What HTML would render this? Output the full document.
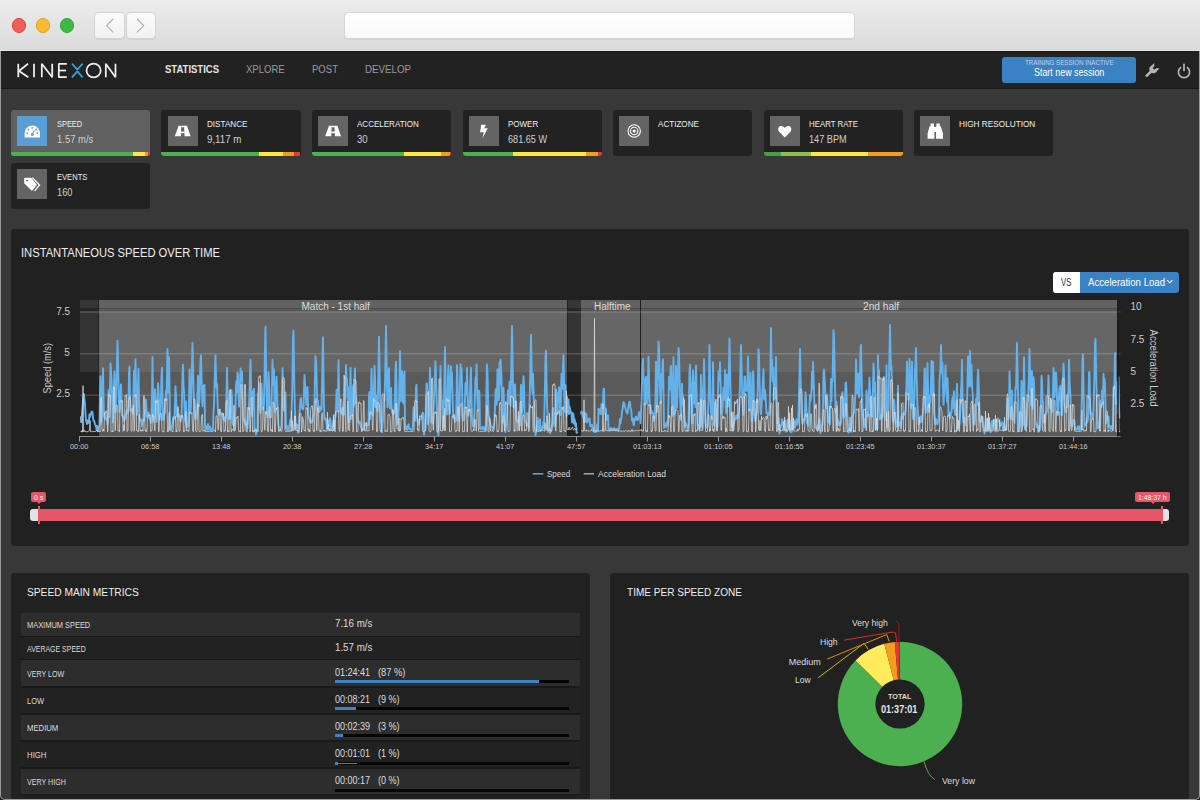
<!DOCTYPE html>
<html><head><meta charset="utf-8">
<style>
*{box-sizing:border-box}
html,body{margin:0;padding:0;width:1200px;height:800px;overflow:hidden;background:#1e1e1e;font-family:"Liberation Sans",sans-serif}
.abs{position:absolute}
.t{position:absolute;white-space:pre;transform-origin:0 0;font-family:"Liberation Sans",sans-serif}
#win{position:absolute;left:0;top:0;width:1200px;height:800px;border-radius:0 0 5px 5px;overflow:hidden;background:#383838}
#frame{position:absolute;left:0;top:51px;width:1200px;height:749px;border-radius:0 0 5px 5px;border:1px solid #9c9c9c;border-top:0;pointer-events:none}
#chrome{position:absolute;left:0;top:0;width:1200px;height:51px;background:linear-gradient(#ececec,#dbdbdb);border-bottom:1px solid #e4e4e4}
.light{position:absolute;width:14.6px;height:14.6px;border-radius:50%}
.navbtn{position:absolute;top:12px;height:27px;background:linear-gradient(#fbfbfb,#f1f1f1);border:1px solid #d3d3d3;border-radius:4px;box-shadow:0 1px 0 rgba(0,0,0,0.06)}
#addr{position:absolute;left:343.6px;top:11.7px;width:511.4px;height:27px;background:linear-gradient(#ffffff,#f9f9f9);border:1px solid #d6d6d6;border-radius:4px;box-shadow:0 1px 0 rgba(0,0,0,0.05)}
#nav{position:absolute;left:0;top:51px;width:1200px;height:38px;background:#222222;border-top:1px solid #1a1a1a;border-bottom:1px solid #1c1c1c}
.tile{position:absolute;height:46px;width:139.5px;background:#222222;border-radius:3px;overflow:hidden}
.tile.act{background:#606060}
.ibox{position:absolute;left:6.5px;top:6.5px;width:30.2px;height:30.2px;background:#646464}
.bar{position:absolute;left:0;bottom:0;height:3.5px;width:100%;display:flex}
.bar span{display:block;height:100%}
.panel{position:absolute;background:#212121;border-radius:3px}
.row{position:absolute;left:21px;width:559px;height:25px}
.row.l{background:#2d2d2d}
.track{position:absolute;left:335px;width:234px;height:3px;background:#050505}
.fill{position:absolute;left:0;top:0;height:3px;background:#3d83c6}
</style></head>
<body>
<div id="win">
  <div id="chrome">
    <div class="light" style="left:11.7px;top:18px;background:#ee5e5a;border:0.6px solid #e0443f"></div>
    <div class="light" style="left:35.8px;top:18px;background:#f8bd2f;border:0.6px solid #e0a21c"></div>
    <div class="light" style="left:59.8px;top:18px;background:#3dba46;border:0.6px solid #2ea83a"></div>
    <div class="navbtn" style="left:94px;width:31px"></div>
    <div class="navbtn" style="left:125.5px;width:30.5px"></div>
    <svg class="abs" style="left:94px;top:12px" width="62" height="27">
      <polyline points="19.2,6.8 12.6,13.6 19.2,20.4" fill="none" stroke="#acacac" stroke-width="1.15"/>
      <polyline points="43,6.8 49.6,13.6 43,20.4" fill="none" stroke="#acacac" stroke-width="1.15"/>
    </svg>
    <div id="addr"></div>
  </div>
  <div id="nav">
    <svg class="abs" style="left:0;top:0" width="130" height="38">
      <g fill="none" stroke="#f0f0f0" stroke-width="1.75" stroke-linejoin="bevel">
        <!-- K -->
        <line x1="18.3" y1="11.8" x2="18.3" y2="25.2"/>
        <polyline points="28,11.8 19,19 28.3,25.2"/>
        <!-- I -->
        <line x1="34" y1="11.8" x2="34" y2="25.2"/>
        <!-- N -->
        <polyline points="41.8,25.2 41.8,11.8 52.2,25.2 52.2,11.8"/>
        <!-- E -->
        <polyline points="66.8,11.8 58.8,11.8 58.8,25.2 66.8,25.2"/>
        <line x1="58.8" y1="18.5" x2="66" y2="18.5"/>
        <!-- O -->
        <ellipse cx="93.6" cy="18.5" rx="7.1" ry="6.8"/>
        <!-- N -->
        <polyline points="105.8,25.2 105.8,11.8 115.5,25.2 115.5,11.8"/>
      </g>
      <g fill="none" stroke="#26a6df" stroke-width="1.8" stroke-linejoin="bevel">
        <polyline points="72,11.6 77.3,17.6 82.6,11.6"/>
        <polyline points="72,25.4 77.3,19.4 82.6,25.4"/>
      </g>
    </svg>
    <div class="abs" style="left:1002px;top:5px;width:134px;height:26px;background:#3b82c4;border-radius:3px"></div>
    <svg class="abs" style="left:1140px;top:8px" width="58" height="24">
      <!-- wrench -->
      <g transform="translate(11.5,11) rotate(45)">
        <rect x="-1.3" y="-1" width="2.6" height="9" rx="1" fill="#b5b5b5"/>
        <path d="M-3.8,-4.5 A4.2,4.2 0 1 0 3.8,-4.5 L3.8,-7.5 L1.4,-5.5 L1.4,-3 L-1.4,-3 L-1.4,-5.5 L-3.8,-7.5 Z" fill="#b5b5b5"/>
      </g>
      <!-- power -->
      <path d="M40.6,7.6 A5.6,5.6 0 1 0 47.4,7.6" fill="none" stroke="#b5b5b5" stroke-width="1.7" stroke-linecap="round"/>
      <line x1="44" y1="4.3" x2="44" y2="10.5" stroke="#b5b5b5" stroke-width="1.7" stroke-linecap="round"/>
    </svg>
  </div>

  <!-- tiles -->
  <div class="tile act" style="left:10.7px;top:109.6px">
    <div class="ibox" style="background:#5a9ed6"></div>
    <div class="bar"><span style="width:87.6%;background:#4caf50"></span><span style="width:8.8%;background:#fde73e"></span><span style="width:2.4%;background:#f39c1f"></span><span style="width:1.2%;background:#e53935"></span></div>
  </div>
  <div class="tile" style="left:161px;top:109.6px">
    <div class="ibox"></div>
    <div class="bar"><span style="width:70%;background:#4caf50"></span><span style="width:17.8%;background:#fde73e"></span><span style="width:7.5%;background:#f39c1f"></span><span style="width:4.7%;background:#e53935"></span></div>
  </div>
  <div class="tile" style="left:311.5px;top:109.6px">
    <div class="ibox"></div>
    <div class="bar"><span style="width:66%;background:#4caf50"></span><span style="width:27%;background:#fde73e"></span><span style="width:6.5%;background:#f39c1f"></span><span style="width:0.5%;background:#e53935"></span></div>
  </div>
  <div class="tile" style="left:462.5px;top:109.6px">
    <div class="ibox"></div>
    <div class="bar"><span style="width:36.5%;background:#4caf50"></span><span style="width:51.8%;background:#fde73e"></span><span style="width:8.6%;background:#f39c1f"></span><span style="width:3.1%;background:#e53935"></span></div>
  </div>
  <div class="tile" style="left:612.5px;top:109.6px">
    <div class="ibox"></div>
  </div>
  <div class="tile" style="left:763.5px;top:109.6px">
    <div class="ibox"></div>
    <div class="bar"><span style="width:12.8%;background:#43a047"></span><span style="width:21%;background:#8bc34a"></span><span style="width:41%;background:#fde73e"></span><span style="width:25.2%;background:#f39c1f"></span></div>
  </div>
  <div class="tile" style="left:913.5px;top:109.6px">
    <div class="ibox"></div>
  </div>
  <div class="tile" style="left:10.7px;top:162.8px">
    <div class="ibox"></div>
  </div>

  <!-- tile icons -->
  <svg class="abs" style="left:0;top:0" width="1200" height="220">
    <g fill="#ffffff">
      <!-- gauge -->
      <path d="M24.6,137.4 L24.6,133 A7.6,7.3 0 0 1 40,133 L40,137.4 Z"/>
      <g fill="#5a9ed6">
        <circle cx="32.3" cy="134.6" r="1.5"/>
        <circle cx="27.3" cy="133.1" r="0.9"/><circle cx="28.5" cy="129.5" r="0.9"/><circle cx="32.3" cy="127.9" r="0.9"/><circle cx="36" cy="129.5" r="0.9"/><circle cx="37.3" cy="133.1" r="0.9"/>
      </g>
      <line x1="32.3" y1="134.6" x2="34.3" y2="130" stroke="#5a9ed6" stroke-width="1"/>
      <!-- road distance -->
      <path d="M178.6,125.8 L181.3,125.8 L180.8,136.3 L174.8,136.3 Z M184,125.8 L187,125.8 L190.6,136.3 L184.6,136.3 Z M181.2,131.5 L184.3,131.5 L184.4,133.3 L181.1,133.3 Z M181.5,125.8 L184,125.8 L184,127.2 L181.4,127.2 Z"/>
      <!-- road acceleration -->
      <path d="M329,125.8 L331.7,125.8 L331.2,136.3 L325.2,136.3 Z M334.4,125.8 L337.4,125.8 L341,136.3 L335,136.3 Z M331.6,131.5 L334.7,131.5 L334.8,133.3 L331.5,133.3 Z M331.9,125.8 L334.4,125.8 L334.4,127.2 L331.8,127.2 Z"/>
      <!-- bolt -->
      <path d="M481.2,124.8 L485.8,124.8 L484.3,128.3 L487.8,128.3 L482.3,138.6 L483.9,132.2 L480.1,132.2 Z"/>
      <!-- heart -->
      <path d="M784.8,137.5 L779.4,132 C777.6,130 777.9,126.6 780.6,126 C782.6,125.6 784,126.8 784.8,128 C785.6,126.8 787,125.6 789,126 C791.7,126.6 792,130 790.2,132 Z"/>
      <!-- binoculars -->
      <path d="M930.6,123.6 L934,123.6 L934,126.2 L934.4,126.2 L934.4,138.8 L927.6,138.8 L927.6,133.6 L929.6,126.2 L930.6,126.2 Z M936.4,123.6 L939.8,123.6 L939.8,126.2 L940.8,126.2 L943,133.6 L943,138.8 L936,138.8 L936,126.2 L936.4,126.2 Z M934,127 L936.4,127 L936.4,132 L934,132 Z"/>
      <!-- tags -->
      <path d="M24.2,178.6 Q24.2,177.8 25,177.8 L31.2,177.8 L36.9,184.8 L32,191 L24.2,183.2 Z"/>
      <polyline points="32.4,177.6 39.6,185 34.6,190.8" fill="none" stroke="#ffffff" stroke-width="1.3"/>
      <circle cx="26.9" cy="180.6" r="0.95" fill="#646464"/>
    </g>
    <!-- target -->
    <g fill="none" stroke="#ffffff" stroke-width="1.1">
      <circle cx="634.2" cy="131" r="6.2"/>
      <circle cx="634.2" cy="131" r="3.7"/>
    </g>
    <circle cx="634.2" cy="131" r="1.6" fill="#ffffff"/>
  </svg>

  <!-- chart panel -->
  <div class="panel" style="left:10.8px;top:229.4px;width:1178.3px;height:316.6px"></div>
  <div class="abs" style="left:1053px;top:271.5px;width:126px;height:21px;background:#3b82c4;border-radius:3px"></div>
  <div class="abs" style="left:1053px;top:271.5px;width:27px;height:21px;background:#ffffff;border-radius:3px 0 0 3px"></div>
  <svg class="abs" style="left:1166px;top:278px" width="10" height="8"><polyline points="1.2,2.2 3.8,4.8 6.4,2.2" fill="none" stroke="#ffffff" stroke-width="1.1"/></svg>
  
<svg class='abs' style='left:0;top:0' width='1200' height='800' viewBox='0 0 1200 800'>
  <defs><clipPath id='pc'><rect x='80' y='300' width='1040.5' height='137'/></clipPath></defs>
  <!-- plot background: outer -->
  <g>
    <rect x='80' y='300' width='1037' height='8.5' fill='#363636'/>
    <rect x='80' y='308.5' width='1037' height='2.7' fill='#262626'/>
    <rect x='80' y='311.2' width='1037' height='60.8' fill='#343434'/>
    <rect x='80' y='372' width='1037' height='64' fill='#232323'/>
  </g>
  <rect x='99' y='300' width='468' height='8.5' fill='#626262'/><rect x='99' y='308.5' width='468' height='2.7' fill='#575757'/><rect x='99' y='311.2' width='468' height='60.8' fill='#666666'/><rect x='99' y='372' width='468' height='64' fill='#5a5a5a'/><rect x='581' y='300' width='59' height='8.5' fill='#626262'/><rect x='581' y='308.5' width='59' height='2.7' fill='#575757'/><rect x='581' y='311.2' width='59' height='60.8' fill='#666666'/><rect x='581' y='372' width='59' height='64' fill='#5a5a5a'/><rect x='641' y='300' width='476' height='8.5' fill='#626262'/><rect x='641' y='308.5' width='476' height='2.7' fill='#575757'/><rect x='641' y='311.2' width='476' height='60.8' fill='#666666'/><rect x='641' y='372' width='476' height='64' fill='#5a5a5a'/>
  <rect x='98' y='300' width='1' height='136' fill='#1f1f1f'/>
  <rect x='567' y='300' width='0.8' height='136' fill='#1f1f1f'/>
  <rect x='640' y='300' width='1' height='136' fill='#1f1f1f'/>
  <!-- grid -->
  <g stroke='#ffffff' stroke-width='1.5' stroke-opacity='0.17'>
    <line x1='80' y1='312' x2='1120.5' y2='312'/>
    <line x1='80' y1='353.7' x2='1120.5' y2='353.7'/>
    <line x1='80' y1='395.3' x2='1120.5' y2='395.3'/>
  </g>
  <g clip-path='url(#pc)'>
    <path d='M80.0,418.3 L80.5,417.2 L81.0,422.0 L81.5,422.0 L82.0,413.9 L82.5,408.1 L83.0,400.4 L83.5,397.0 L84.0,394.1 L84.5,399.9 L85.0,404.5 L85.5,413.5 L86.0,420.7 L86.5,421.9 L87.0,424.0 L87.5,420.5 L88.0,423.0 L88.5,422.8 L89.0,419.1 L89.5,414.3 L90.0,417.1 L90.5,414.0 L91.0,414.4 L91.5,411.8 L92.0,411.5 L92.5,412.4 L93.0,418.0 L93.5,420.6 L94.0,420.6 L94.5,422.2 L95.0,424.2 L95.5,425.6 L96.0,426.0 L96.5,429.8 L97.0,425.8 L97.5,430.1 L98.0,430.8 L98.5,427.6 L99.0,426.4 L99.5,425.5 L100.0,389.0 L100.5,376.1 L101.0,401.2 L101.5,422.2 L102.0,412.1 L102.5,388.0 L103.0,368.3 L103.5,397.9 L104.0,416.9 L104.5,415.1 L105.0,413.5 L105.5,419.2 L106.0,419.5 L106.5,419.5 L107.0,417.8 L107.5,424.5 L108.0,412.7 L108.5,390.3 L109.0,406.0 L109.5,417.0 L110.0,388.7 L110.5,363.3 L111.0,369.7 L111.5,379.8 L112.0,393.5 L112.5,408.6 L113.0,422.4 L113.5,408.6 L114.0,383.5 L114.5,371.4 L115.0,397.4 L115.5,412.0 L116.0,400.9 L116.5,382.9 L117.0,362.6 L117.5,340.8 L118.0,362.6 L118.5,382.9 L119.0,400.9 L119.5,412.0 L120.0,402.9 L120.5,394.0 L121.0,384.4 L121.5,400.4 L122.0,415.5 L122.5,415.1 L123.0,418.0 L123.5,416.4 L124.0,421.4 L124.5,418.5 L125.0,418.3 L125.5,418.6 L126.0,414.3 L126.5,410.9 L127.0,413.3 L127.5,409.7 L128.0,412.6 L128.5,401.9 L129.0,372.1 L129.5,366.6 L130.0,399.9 L130.5,410.6 L131.0,408.9 L131.5,411.0 L132.0,410.9 L132.5,413.2 L133.0,413.5 L133.5,390.1 L134.0,370.8 L134.5,396.0 L135.0,374.2 L135.5,359.3 L136.0,381.9 L136.5,388.8 L137.0,414.9 L137.5,411.1 L138.0,387.0 L138.5,369.0 L139.0,394.8 L139.5,417.3 L140.0,420.6 L140.5,420.4 L141.0,419.3 L141.5,421.6 L142.0,426.2 L142.5,421.3 L143.0,420.0 L143.5,419.2 L144.0,420.9 L144.5,418.4 L145.0,412.9 L145.5,408.9 L146.0,399.6 L146.5,408.7 L147.0,416.8 L147.5,415.4 L148.0,415.1 L148.5,412.5 L149.0,417.9 L149.5,415.8 L150.0,419.3 L150.5,417.6 L151.0,423.0 L151.5,416.0 L152.0,395.7 L152.5,357.0 L153.0,398.8 L153.5,421.7 L154.0,413.2 L154.5,401.0 L155.0,389.5 L155.5,402.4 L156.0,414.5 L156.5,421.7 L157.0,414.5 L157.5,399.4 L158.0,383.2 L158.5,389.4 L159.0,405.3 L159.5,419.7 L160.0,417.2 L160.5,404.2 L161.0,397.4 L161.5,375.3 L162.0,367.6 L162.5,401.5 L163.0,420.1 L163.5,419.0 L164.0,414.2 L164.5,412.8 L165.0,412.8 L165.5,402.0 L166.0,390.3 L166.5,397.7 L167.0,375.1 L167.5,349.0 L168.0,375.1 L168.5,393.0 L169.0,357.3 L169.5,386.1 L170.0,429.6 L170.5,426.2 L171.0,426.3 L171.5,428.7 L172.0,426.7 L172.5,425.7 L173.0,417.7 L173.5,419.9 L174.0,416.4 L174.5,416.7 L175.0,405.1 L175.5,386.3 L176.0,395.1 L176.5,413.4 L177.0,416.5 L177.5,415.1 L178.0,414.5 L178.5,415.9 L179.0,414.4 L179.5,418.0 L180.0,418.5 L180.5,421.5 L181.0,418.1 L181.5,419.7 L182.0,397.6 L182.5,373.0 L183.0,364.8 L183.5,385.5 L184.0,391.4 L184.5,406.4 L185.0,420.0 L185.5,421.6 L186.0,401.1 L186.5,423.5 L187.0,427.3 L187.5,424.7 L188.0,426.5 L188.5,424.6 L189.0,399.5 L189.5,369.5 L190.0,393.8 L190.5,412.0 L191.0,403.8 L191.5,385.8 L192.0,365.2 L192.5,343.0 L193.0,365.2 L193.5,385.8 L194.0,403.8 L194.5,412.0 L195.0,415.2 L195.5,419.4 L196.0,416.5 L196.5,417.9 L197.0,409.6 L197.5,393.2 L198.0,375.7 L198.5,389.7 L199.0,406.4 L199.5,396.4 L200.0,378.7 L200.5,359.3 L201.0,355.2 L201.5,375.0 L202.0,393.0 L202.5,406.3 L203.0,398.5 L203.5,385.8 L204.0,386.4 L204.5,385.0 L205.0,426.8 L205.5,429.8 L206.0,426.3 L206.5,429.1 L207.0,427.4 L207.5,430.1 L208.0,424.0 L208.5,428.7 L209.0,429.7 L209.5,427.0 L210.0,426.5 L210.5,427.8 L211.0,430.2 L211.5,429.8 L212.0,430.1 L212.5,428.8 L213.0,429.2 L213.5,412.0 L214.0,404.6 L214.5,387.5 L215.0,367.9 L215.5,355.3 L216.0,375.2 L216.5,387.7 L217.0,384.0 L217.5,399.9 L218.0,412.8 L218.5,415.1 L219.0,413.4 L219.5,410.5 L220.0,412.9 L220.5,413.9 L221.0,413.0 L221.5,413.6 L222.0,414.1 L222.5,416.3 L223.0,414.4 L223.5,419.5 L224.0,416.8 L224.5,419.1 L225.0,421.6 L225.5,418.9 L226.0,416.5 L226.5,392.2 L227.0,367.6 L227.5,387.5 L228.0,399.2 L228.5,410.2 L229.0,418.9 L229.5,418.9 L230.0,418.9 L230.5,410.9 L231.0,400.9 L231.5,390.3 L232.0,397.5 L232.5,423.1 L233.0,424.8 L233.5,421.7 L234.0,424.9 L234.5,424.7 L235.0,421.3 L235.5,405.1 L236.0,385.5 L236.5,381.0 L237.0,392.5 L237.5,372.4 L238.0,375.1 L238.5,395.1 L239.0,406.6 L239.5,393.5 L240.0,386.5 L240.5,368.4 L241.0,380.5 L241.5,380.4 L242.0,371.4 L242.5,395.9 L243.0,410.9 L243.5,420.3 L244.0,420.9 L244.5,419.2 L245.0,424.3 L245.5,421.6 L246.0,422.9 L246.5,425.7 L247.0,425.4 L247.5,428.4 L248.0,421.8 L248.5,416.9 L249.0,405.8 L249.5,393.9 L250.0,374.5 L250.5,359.5 L251.0,382.7 L251.5,404.6 L252.0,416.0 L252.5,403.9 L253.0,390.9 L253.5,400.9 L254.0,388.7 L254.5,431.1 L255.0,430.1 L255.5,428.9 L256.0,434.5 L256.5,433.2 L257.0,430.4 L257.5,430.5 L258.0,393.5 L258.5,400.0 L259.0,382.7 L259.5,402.6 L260.0,409.2 L260.5,413.3 L261.0,407.0 L261.5,384.0 L262.0,392.4 L262.5,406.0 L263.0,409.3 L263.5,409.3 L264.0,403.4 L264.5,377.0 L265.0,346.4 L265.5,326.7 L266.0,359.1 L266.5,388.3 L267.0,411.4 L267.5,417.3 L268.0,404.1 L268.5,372.3 L269.0,380.2 L269.5,411.0 L270.0,417.3 L270.5,417.3 L271.0,417.3 L271.5,403.7 L272.0,382.6 L272.5,359.6 L273.0,374.3 L273.5,384.8 L274.0,369.2 L274.5,404.5 L275.0,412.3 L275.5,398.8 L276.0,384.3 L276.5,376.7 L277.0,391.6 L277.5,405.6 L278.0,416.5 L278.5,425.5 L279.0,427.5 L279.5,430.6 L280.0,428.2 L280.5,427.5 L281.0,427.2 L281.5,427.3 L282.0,393.8 L282.5,368.3 L283.0,384.7 L283.5,408.8 L284.0,410.9 L284.5,408.9 L285.0,404.3 L285.5,392.5 L286.0,428.6 L286.5,429.1 L287.0,426.0 L287.5,430.1 L288.0,427.6 L288.5,430.0 L289.0,429.1 L289.5,425.3 L290.0,421.7 L290.5,419.2 L291.0,425.9 L291.5,412.0 L292.0,399.1 L292.5,370.4 L293.0,337.7 L293.5,330.8 L294.0,364.1 L294.5,393.8 L295.0,412.0 L295.5,424.3 L296.0,425.3 L296.5,424.1 L297.0,428.3 L297.5,425.0 L298.0,432.9 L298.5,429.0 L299.0,431.9 L299.5,411.7 L300.0,406.0 L300.5,398.9 L301.0,398.0 L301.5,405.1 L302.0,408.1 L302.5,408.8 L303.0,409.4 L303.5,407.1 L304.0,391.3 L304.5,374.9 L305.0,385.0 L305.5,388.3 L306.0,400.4 L306.5,404.9 L307.0,388.2 L307.5,387.0 L308.0,403.8 L308.5,415.2 L309.0,418.4 L309.5,418.2 L310.0,422.1 L310.5,418.7 L311.0,422.8 L311.5,422.4 L312.0,422.0 L312.5,420.8 L313.0,421.1 L313.5,415.3 L314.0,415.3 L314.5,400.1 L315.0,378.8 L315.5,356.1 L316.0,360.4 L316.5,372.5 L317.0,393.8 L317.5,409.2 L318.0,400.5 L318.5,408.8 L319.0,412.3 L319.5,411.5 L320.0,406.6 L320.5,410.2 L321.0,410.1 L321.5,409.2 L322.0,384.1 L322.5,356.8 L323.0,337.2 L323.5,375.7 L324.0,407.6 L324.5,419.2 L325.0,417.7 L325.5,420.0 L326.0,419.3 L326.5,423.4 L327.0,428.9 L327.5,429.7 L328.0,420.4 L328.5,424.5 L329.0,425.6 L329.5,426.0 L330.0,418.2 L330.5,421.0 L331.0,429.6 L331.5,430.2 L332.0,428.0 L332.5,426.5 L333.0,424.1 L333.5,420.2 L334.0,425.0 L334.5,427.5 L335.0,414.8 L335.5,416.3 L336.0,410.9 L336.5,389.7 L337.0,394.6 L337.5,409.7 L338.0,395.0 L338.5,360.1 L339.0,386.0 L339.5,409.8 L340.0,411.3 L340.5,410.9 L341.0,413.8 L341.5,410.7 L342.0,409.8 L342.5,407.7 L343.0,414.7 L343.5,411.8 L344.0,414.6 L344.5,400.9 L345.0,380.3 L345.5,384.4 L346.0,365.0 L346.5,378.6 L347.0,378.6 L347.5,398.6 L348.0,386.8 L348.5,421.8 L349.0,421.6 L349.5,422.1 L350.0,395.4 L350.5,367.6 L351.0,395.3 L351.5,419.1 L352.0,415.7 L352.5,407.9 L353.0,387.5 L353.5,384.9 L354.0,405.5 L354.5,378.2 L355.0,368.4 L355.5,402.9 L356.0,397.1 L356.5,400.5 L357.0,414.4 L357.5,419.2 L358.0,422.1 L358.5,420.8 L359.0,422.3 L359.5,423.5 L360.0,422.2 L360.5,424.5 L361.0,427.0 L361.5,428.0 L362.0,430.9 L362.5,429.0 L363.0,430.2 L363.5,429.5 L364.0,429.3 L364.5,424.1 L365.0,423.5 L365.5,423.5 L366.0,425.1 L366.5,424.8 L367.0,426.0 L367.5,424.7 L368.0,423.9 L368.5,424.9 L369.0,395.6 L369.5,391.9 L370.0,419.2 L370.5,411.5 L371.0,390.9 L371.5,368.9 L372.0,388.6 L372.5,409.4 L373.0,415.5 L373.5,406.7 L374.0,386.3 L374.5,365.9 L375.0,376.8 L375.5,407.0 L376.0,399.2 L376.5,395.7 L377.0,409.1 L377.5,411.6 L378.0,391.2 L378.5,365.3 L379.0,336.7 L379.5,365.3 L380.0,391.2 L380.5,408.2 L381.0,422.2 L381.5,423.2 L382.0,432.4 L382.5,423.2 L383.0,420.6 L383.5,408.6 L384.0,395.5 L384.5,399.9 L385.0,384.1 L385.5,356.3 L386.0,326.0 L386.5,356.3 L387.0,384.1 L387.5,407.4 L388.0,399.9 L388.5,371.9 L389.0,368.1 L389.5,396.3 L390.0,408.5 L390.5,392.0 L391.0,387.9 L391.5,404.7 L392.0,411.6 L392.5,413.4 L393.0,411.2 L393.5,414.0 L394.0,412.4 L394.5,412.8 L395.0,392.7 L395.5,368.8 L396.0,361.8 L396.5,383.9 L397.0,424.7 L397.5,420.5 L398.0,423.8 L398.5,412.0 L399.0,401.2 L399.5,377.8 L400.0,351.0 L400.5,377.8 L401.0,401.2 L401.5,397.1 L402.0,371.1 L402.5,376.6 L403.0,402.2 L403.5,403.5 L404.0,380.5 L404.5,371.5 L405.0,428.2 L405.5,429.2 L406.0,427.8 L406.5,426.1 L407.0,429.9 L407.5,427.2 L408.0,427.9 L408.5,424.1 L409.0,428.9 L409.5,429.1 L410.0,428.5 L410.5,429.3 L411.0,429.7 L411.5,429.6 L412.0,429.8 L412.5,429.4 L413.0,424.1 L413.5,407.3 L414.0,415.9 L414.5,420.9 L415.0,420.9 L415.5,415.0 L416.0,387.6 L416.5,384.8 L417.0,412.5 L417.5,420.9 L418.0,422.8 L418.5,420.6 L419.0,424.9 L419.5,420.3 L420.0,419.1 L420.5,418.9 L421.0,418.8 L421.5,418.3 L422.0,414.2 L422.5,413.3 L423.0,412.7 L423.5,414.6 L424.0,434.5 L424.5,430.8 L425.0,428.8 L425.5,429.7 L426.0,406.7 L426.5,383.5 L427.0,384.1 L427.5,407.2 L428.0,424.5 L428.5,420.3 L429.0,416.2 L429.5,387.7 L430.0,367.8 L430.5,385.2 L431.0,409.3 L431.5,422.5 L432.0,418.1 L432.5,420.8 L433.0,423.7 L433.5,412.0 L434.0,401.0 L434.5,384.6 L435.0,372.3 L435.5,361.3 L436.0,379.4 L436.5,395.9 L437.0,409.6 L437.5,432.1 L438.0,432.7 L438.5,435.3 L439.0,427.5 L439.5,425.9 L440.0,393.6 L440.5,365.9 L441.0,386.1 L441.5,399.3 L442.0,401.1 L442.5,419.8 L443.0,427.5 L443.5,412.0 L444.0,401.6 L444.5,376.2 L445.0,347.0 L445.5,376.2 L446.0,401.6 L446.5,412.0 L447.0,414.4 L447.5,405.6 L448.0,376.3 L448.5,365.5 L449.0,395.7 L449.5,413.8 L450.0,413.4 L450.5,382.0 L451.0,366.3 L451.5,387.5 L452.0,372.6 L452.5,392.2 L453.0,410.5 L453.5,417.3 L454.0,418.5 L454.5,418.6 L455.0,422.3 L455.5,417.3 L456.0,420.5 L456.5,395.9 L457.0,364.9 L457.5,377.8 L458.0,407.7 L458.5,420.5 L459.0,420.2 L459.5,403.4 L460.0,384.3 L460.5,364.2 L461.0,377.7 L461.5,367.9 L462.0,383.1 L462.5,416.4 L463.0,420.5 L463.5,420.5 L464.0,419.0 L464.5,412.8 L465.0,398.4 L465.5,382.9 L466.0,382.8 L466.5,394.5 L467.0,368.0 L467.5,389.9 L468.0,414.5 L468.5,415.6 L469.0,411.8 L469.5,407.5 L470.0,393.7 L470.5,376.3 L471.0,367.8 L471.5,400.0 L472.0,417.1 L472.5,423.2 L473.0,426.4 L473.5,422.2 L474.0,426.8 L474.5,408.8 L475.0,393.5 L475.5,377.2 L476.0,383.8 L476.5,364.4 L477.0,383.3 L477.5,403.4 L478.0,411.1 L478.5,406.9 L479.0,390.6 L479.5,393.9 L480.0,428.7 L480.5,429.0 L481.0,428.5 L481.5,429.4 L482.0,428.3 L482.5,426.6 L483.0,429.3 L483.5,427.5 L484.0,427.0 L484.5,430.2 L485.0,429.7 L485.5,430.2 L486.0,425.6 L486.5,386.8 L487.0,364.5 L487.5,372.8 L488.0,394.7 L488.5,414.4 L489.0,416.3 L489.5,420.8 L490.0,421.7 L490.5,424.4 L491.0,426.5 L491.5,426.9 L492.0,426.8 L492.5,429.6 L493.0,429.0 L493.5,427.7 L494.0,426.5 L494.5,421.2 L495.0,407.2 L495.5,391.5 L496.0,389.0 L496.5,404.8 L497.0,397.9 L497.5,369.2 L498.0,371.3 L498.5,399.9 L499.0,400.3 L499.5,362.3 L500.0,384.2 L500.5,359.4 L501.0,368.1 L501.5,377.0 L502.0,402.1 L502.5,422.9 L503.0,408.2 L503.5,387.8 L504.0,403.8 L504.5,422.6 L505.0,426.3 L505.5,432.0 L506.0,426.3 L506.5,426.3 L507.0,417.0 L507.5,404.0 L508.0,390.3 L508.5,402.5 L509.0,403.3 L509.5,381.8 L510.0,384.1 L510.5,405.4 L511.0,383.4 L511.5,356.0 L512.0,326.0 L512.5,356.0 L513.0,383.4 L513.5,406.6 L514.0,407.7 L514.5,396.4 L515.0,384.4 L515.5,401.9 L516.0,418.3 L516.5,420.2 L517.0,420.8 L517.5,421.9 L518.0,419.9 L518.5,420.7 L519.0,419.2 L519.5,416.2 L520.0,425.4 L520.5,407.0 L521.0,384.7 L521.5,391.5 L522.0,413.3 L522.5,405.2 L523.0,389.4 L523.5,376.3 L524.0,385.4 L524.5,410.2 L525.0,421.5 L525.5,421.4 L526.0,421.8 L526.5,425.2 L527.0,424.1 L527.5,425.3 L528.0,425.9 L528.5,427.0 L529.0,412.0 L529.5,404.7 L530.0,384.1 L530.5,360.4 L531.0,334.6 L531.5,360.4 L532.0,384.1 L532.5,393.8 L533.0,373.6 L533.5,388.2 L534.0,407.6 L534.5,425.3 L535.0,428.6 L535.5,435.3 L536.0,432.8 L536.5,428.6 L537.0,427.7 L537.5,417.7 L538.0,430.3 L538.5,428.0 L539.0,424.8 L539.5,421.4 L540.0,419.2 L540.5,431.3 L541.0,428.5 L541.5,430.3 L542.0,428.8 L542.5,426.2 L543.0,428.6 L543.5,421.5 L544.0,427.5 L544.5,407.3 L545.0,384.1 L545.5,356.6 L546.0,350.7 L546.5,378.9 L547.0,403.2 L547.5,412.0 L548.0,431.9 L548.5,428.9 L549.0,428.5 L549.5,428.9 L550.0,433.3 L550.5,431.6 L551.0,429.9 L551.5,430.0 L552.0,424.9 L552.5,422.2 L553.0,407.9 L553.5,416.5 L554.0,424.2 L554.5,426.2 L555.0,423.3 L555.5,407.9 L556.0,389.5 L556.5,393.8 L557.0,411.9 L557.5,414.0 L558.0,399.1 L558.5,393.1 L559.0,387.1 L559.5,391.0 L560.0,407.1 L560.5,415.0 L561.0,394.9 L561.5,373.6 L562.0,387.5 L562.5,388.7 L563.0,367.0 L563.5,355.3 L564.0,381.3 L564.5,403.9 L565.0,412.0 L565.5,385.3 L566.0,399.3 L566.5,415.8 L567.0,396.9 L567.5,401.9 L568.0,411.8 L568.5,399.5 L569.0,414.1 L569.5,406.5 L570.0,408.6 L570.5,410.9 L571.0,413.2 L571.5,413.2 L572.0,422.4 L572.5,412.7 L573.0,415.0 L573.5,414.2 L574.0,423.7 L574.5,419.0 L575.0,421.8 L575.5,426.2 L576.0,423.2 L576.5,432.7 L577.0,432.3 L577.5,433.3 M581.0,414.4 L581.5,411.4 L582.0,411.9 L582.5,413.3 L583.0,417.2 L583.5,416.3 L584.0,422.3 L584.5,421.9 L585.0,412.7 L585.5,416.3 L586.0,421.4 L586.5,414.0 L587.0,422.5 L587.5,420.9 L588.0,419.2 L588.5,419.7 L589.0,421.0 L589.5,418.1 L590.0,424.5 L590.5,426.5 L591.0,425.2 L591.5,426.0 L592.0,424.9 L592.5,428.5 L593.0,427.9 L593.5,430.5 L594.0,430.6 L594.5,432.0 L595.0,432.1 L595.5,431.0 L596.0,431.7 L596.5,430.4 L597.0,424.4 L597.5,427.9 L598.0,431.3 L598.5,408.9 L599.0,411.0 L599.5,412.9 L600.0,413.0 L600.5,408.3 L601.0,414.1 L601.5,403.9 L602.0,407.3 L602.5,408.3 L603.0,404.2 L603.5,388.6 L604.0,388.6 L604.5,409.8 L605.0,413.6 L605.5,408.0 L606.0,408.9 L606.5,420.0 L607.0,415.2 L607.5,418.1 L608.0,415.2 L608.5,429.0 L609.0,428.6 L609.5,430.2 L610.0,428.6 L610.5,428.9 L611.0,427.9 L611.5,429.1 L612.0,429.4 L612.5,429.5 L613.0,428.9 L613.5,429.7 L614.0,428.0 L614.5,429.6 L615.0,429.6 L615.5,429.1 L616.0,429.2 L616.5,430.0 L617.0,428.8 L617.5,429.3 L618.0,430.5 L618.5,430.9 L619.0,428.2 L619.5,425.6 L620.0,418.9 L620.5,423.3 L621.0,419.4 L621.5,417.5 L622.0,411.6 L622.5,409.6 L623.0,406.0 L623.5,402.1 L624.0,403.1 L624.5,404.2 L625.0,406.5 L625.5,407.8 L626.0,411.0 L626.5,411.8 L627.0,413.2 L627.5,413.5 L628.0,409.6 L628.5,406.3 L629.0,404.3 L629.5,401.6 L630.0,402.3 L630.5,408.8 L631.0,409.0 L631.5,413.2 L632.0,420.5 L632.5,418.5 L633.0,420.9 L633.5,424.9 L634.0,424.9 L634.5,418.4 L635.0,419.0 L635.5,420.1 L636.0,416.5 L636.5,417.6 L637.0,418.5 L637.5,419.9 L638.0,419.5 L638.5,415.6 L639.0,411.9 L639.5,414.0 L640.0,412.9 L640.5,423.2 L641.0,411.7 L641.5,398.4 L642.0,381.6 L642.5,362.9 L643.0,359.0 L643.5,377.9 L644.0,378.6 L644.5,401.6 L645.0,404.7 L645.5,402.5 L646.0,376.7 L646.5,377.7 L647.0,403.4 L647.5,400.2 L648.0,379.0 L648.5,356.6 L649.0,376.5 L649.5,397.9 L650.0,413.5 L650.5,404.6 L651.0,413.2 L651.5,412.1 L652.0,411.2 L652.5,413.2 L653.0,412.7 L653.5,420.8 L654.0,415.0 L654.5,420.0 L655.0,414.5 L655.5,396.2 L656.0,361.6 L656.5,394.2 L657.0,412.0 L657.5,394.2 L658.0,369.4 L658.5,341.7 L659.0,347.4 L659.5,370.9 L660.0,385.5 L660.5,401.9 L661.0,403.2 L661.5,373.6 L662.0,387.5 L662.5,363.8 L663.0,359.2 L663.5,390.8 L664.0,427.9 L664.5,422.7 L665.0,424.5 L665.5,426.1 L666.0,427.0 L666.5,426.1 L667.0,421.8 L667.5,425.3 L668.0,418.6 L668.5,401.7 L669.0,376.8 L669.5,387.9 L670.0,389.3 L670.5,367.4 L671.0,365.8 L671.5,387.8 L672.0,408.4 L672.5,415.8 L673.0,387.4 L673.5,357.3 L674.0,391.2 L674.5,414.5 L675.0,413.0 L675.5,401.7 L676.0,365.9 L676.5,388.3 L677.0,407.7 L677.5,390.5 L678.0,370.2 L678.5,348.0 L679.0,352.6 L679.5,374.4 L680.0,394.2 L680.5,409.1 L681.0,419.8 L681.5,395.0 L682.0,383.6 L682.5,404.2 L683.0,395.4 L683.5,403.4 L684.0,411.8 L684.5,419.3 L685.0,426.7 L685.5,426.6 L686.0,423.3 L686.5,425.5 L687.0,425.6 L687.5,428.3 L688.0,428.1 L688.5,425.6 L689.0,396.3 L689.5,371.5 L690.0,364.8 L690.5,381.5 L691.0,383.9 L691.5,411.6 L692.0,423.4 L692.5,405.0 L693.0,370.4 L693.5,376.4 L694.0,403.2 L694.5,382.5 L695.0,388.0 L695.5,407.0 L696.0,365.5 L696.5,388.0 L697.0,412.5 L697.5,425.1 L698.0,426.6 L698.5,425.0 L699.0,429.4 L699.5,425.2 L700.0,426.6 L700.5,405.6 L701.0,374.7 L701.5,399.9 L702.0,426.6 L702.5,412.0 L703.0,394.1 L703.5,384.3 L704.0,359.0 L704.5,377.0 L705.0,401.4 L705.5,423.4 L706.0,426.6 L706.5,427.6 L707.0,425.7 L707.5,426.9 L708.0,412.0 L708.5,399.5 L709.0,374.0 L709.5,345.0 L710.0,374.0 L710.5,399.5 L711.0,412.0 L711.5,418.6 L712.0,419.0 L712.5,406.8 L713.0,362.3 L713.5,394.0 L714.0,425.8 L714.5,420.0 L715.0,409.6 L715.5,403.2 L716.0,414.0 L716.5,429.7 L717.0,425.9 L717.5,426.6 L718.0,389.4 L718.5,371.2 L719.0,374.2 L719.5,380.5 L720.0,362.3 L720.5,382.2 L721.0,401.1 L721.5,413.2 L722.0,414.7 L722.5,409.1 L723.0,397.2 L723.5,387.6 L724.0,400.0 L724.5,387.5 L725.0,370.0 L725.5,395.2 L726.0,413.2 L726.5,394.0 L727.0,374.7 L727.5,395.3 L728.0,406.5 L728.5,376.0 L729.0,365.1 L729.5,338.8 L730.0,365.1 L730.5,389.1 L731.0,409.0 L731.5,426.4 L732.0,426.6 L732.5,425.7 L733.0,424.1 L733.5,425.7 L734.0,422.3 L734.5,420.0 L735.0,417.7 L735.5,419.6 L736.0,416.6 L736.5,415.5 L737.0,418.3 L737.5,416.8 L738.0,417.7 L738.5,413.9 L739.0,412.0 L739.5,400.8 L740.0,384.0 L740.5,365.2 L741.0,345.0 L741.5,365.2 L742.0,384.0 L742.5,400.8 L743.0,412.0 L743.5,415.0 L744.0,396.8 L744.5,377.1 L745.0,376.4 L745.5,381.9 L746.0,390.4 L746.5,391.1 L747.0,384.6 L747.5,387.6 L748.0,356.4 L748.5,385.4 L749.0,410.0 L749.5,410.5 L750.0,390.6 L750.5,372.6 L751.0,393.7 L751.5,413.3 L752.0,421.5 L752.5,403.8 L753.0,371.2 L753.5,373.7 L754.0,406.1 L754.5,415.6 L755.0,418.3 L755.5,421.0 L756.0,416.3 L756.5,413.0 L757.0,412.0 L757.5,396.5 L758.0,374.2 L758.5,349.3 L759.0,354.4 L759.5,378.9 L760.0,400.6 L760.5,412.0 L761.0,414.4 L761.5,406.9 L762.0,397.2 L762.5,387.0 L763.0,377.8 L763.5,369.3 L764.0,397.5 L764.5,399.6 L765.0,390.0 L765.5,395.7 L766.0,405.1 L766.5,413.3 L767.0,412.5 L767.5,414.9 L768.0,412.9 L768.5,415.5 L769.0,414.9 L769.5,412.0 L770.0,395.4 L770.5,363.8 L771.0,328.0 L771.5,363.8 L772.0,359.5 L772.5,380.7 L773.0,381.4 L773.5,367.5 L774.0,399.6 L774.5,388.2 L775.0,398.1 L775.5,388.5 L776.0,357.0 L776.5,391.7 L777.0,416.4 L777.5,423.1 L778.0,419.7 L778.5,418.2 L779.0,430.1 L779.5,433.6 L780.0,429.6 L780.5,426.5 L781.0,425.2 L781.5,425.8 L782.0,419.3 L782.5,421.3 L783.0,423.6 L783.5,424.4 L784.0,426.3 L784.5,425.9 L785.0,420.5 L785.5,420.7 L786.0,431.7 L786.5,430.5 L787.0,426.2 L787.5,426.7 L788.0,419.4 L788.5,424.4 L789.0,419.3 L789.5,421.9 L790.0,431.2 L790.5,428.0 L791.0,432.3 L791.5,429.9 L792.0,430.2 L792.5,431.3 L793.0,423.5 L793.5,423.6 L794.0,420.8 L794.5,421.1 L795.0,427.5 L795.5,425.0 L796.0,424.5 L796.5,419.1 L797.0,421.3 L797.5,424.9 L798.0,421.9 L798.5,412.0 L799.0,395.8 L799.5,373.6 L800.0,349.0 L800.5,373.6 L801.0,395.8 L801.5,412.0 L802.0,419.4 L802.5,423.8 L803.0,422.2 L803.5,419.2 L804.0,419.7 L804.5,420.1 L805.0,408.4 L805.5,392.1 L806.0,399.0 L806.5,411.3 L807.0,422.7 L807.5,423.6 L808.0,425.3 L808.5,425.8 L809.0,419.6 L809.5,407.6 L810.0,394.9 L810.5,400.9 L811.0,397.8 L811.5,390.0 L812.0,371.8 L812.5,388.9 L813.0,361.9 L813.5,376.2 L814.0,390.2 L814.5,414.1 L815.0,426.7 L815.5,427.5 L816.0,428.0 L816.5,428.3 L817.0,429.2 L817.5,425.8 L818.0,430.0 L818.5,426.0 L819.0,422.9 L819.5,419.2 L820.0,425.8 L820.5,433.2 L821.0,425.9 L821.5,429.5 L822.0,425.8 L822.5,422.2 L823.0,404.8 L823.5,373.7 L824.0,369.4 L824.5,376.8 L825.0,384.5 L825.5,403.7 L826.0,408.0 L826.5,395.0 L827.0,394.4 L827.5,405.8 L828.0,416.6 L828.5,422.2 L829.0,417.3 L829.5,419.2 L830.0,424.4 L830.5,403.0 L831.0,378.9 L831.5,401.2 L832.0,379.1 L832.5,381.7 L833.0,357.0 L833.5,330.2 L834.0,335.7 L834.5,362.1 L835.0,386.4 L835.5,406.9 L836.0,412.0 L836.5,401.6 L837.0,408.5 L837.5,425.4 L838.0,419.7 L838.5,424.9 L839.0,424.6 L839.5,422.5 L840.0,425.3 L840.5,424.3 L841.0,422.5 L841.5,411.7 L842.0,394.1 L842.5,392.2 L843.0,410.0 L843.5,418.0 L844.0,416.2 L844.5,416.3 L845.0,400.3 L845.5,383.3 L846.0,382.4 L846.5,389.9 L847.0,410.0 L847.5,418.0 L848.0,424.8 L848.5,432.8 L849.0,428.8 L849.5,430.8 L850.0,428.9 L850.5,429.2 L851.0,431.9 L851.5,431.2 L852.0,419.5 L852.5,416.0 L853.0,415.6 L853.5,412.9 L854.0,413.0 L854.5,408.9 L855.0,400.2 L855.5,392.3 L856.0,359.3 L856.5,374.4 L857.0,393.2 L857.5,391.5 L858.0,382.2 L858.5,373.5 L859.0,397.3 L859.5,396.2 L860.0,374.4 L860.5,350.1 L861.0,345.0 L861.5,369.7 L862.0,392.2 L862.5,410.5 L863.0,418.7 L863.5,418.7 L864.0,424.2 L864.5,427.5 L865.0,426.3 L865.5,418.7 L866.0,408.0 L866.5,390.5 L867.0,398.4 L867.5,415.0 L868.0,416.6 L868.5,404.3 L869.0,390.8 L869.5,377.7 L870.0,391.8 L870.5,405.2 L871.0,415.1 L871.5,416.4 L872.0,416.8 L872.5,406.4 L873.0,385.6 L873.5,363.5 L874.0,369.8 L874.5,391.6 L875.0,382.3 L875.5,429.5 L876.0,427.6 L876.5,427.2 L877.0,427.8 L877.5,429.0 L878.0,355.3 L878.5,380.4 L879.0,370.2 L879.5,408.2 L880.0,419.4 L880.5,418.6 L881.0,418.3 L881.5,415.4 L882.0,416.4 L882.5,417.2 L883.0,408.8 L883.5,393.0 L884.0,377.0 L884.5,393.6 L885.0,409.4 L885.5,420.2 L886.0,399.5 L886.5,365.1 L887.0,424.9 L887.5,427.3 L888.0,412.0 L888.5,401.7 L889.0,379.0 L889.5,353.0 L890.0,325.0 L890.5,353.0 L891.0,369.4 L891.5,366.0 L892.0,390.3 L892.5,413.2 L893.0,421.1 L893.5,411.6 L894.0,399.8 L894.5,405.1 L895.0,416.7 L895.5,421.7 L896.0,424.3 L896.5,423.8 L897.0,426.9 L897.5,412.2 L898.0,385.7 L898.5,422.2 L899.0,425.9 L899.5,422.5 L900.0,423.0 L900.5,423.7 L901.0,427.8 L901.5,416.8 L902.0,416.1 L902.5,414.1 L903.0,419.0 L903.5,413.2 L904.0,415.1 L904.5,413.2 L905.0,414.2 L905.5,410.5 L906.0,399.6 L906.5,381.1 L907.0,361.8 L907.5,380.8 L908.0,380.7 L908.5,399.6 L909.0,376.4 L909.5,358.8 L910.0,383.0 L910.5,405.8 L911.0,408.2 L911.5,386.0 L912.0,361.6 L912.5,388.7 L913.0,418.7 L913.5,418.7 L914.0,412.0 L914.5,392.0 L915.0,370.1 L915.5,363.3 L916.0,348.0 L916.5,370.2 L917.0,390.5 L917.5,407.7 L918.0,412.0 L918.5,424.1 L919.0,423.6 L919.5,417.7 L920.0,422.6 L920.5,416.1 L921.0,419.4 L921.5,420.3 L922.0,421.9 L922.5,415.9 L923.0,411.8 L923.5,406.3 L924.0,395.3 L924.5,369.3 L925.0,368.4 L925.5,394.4 L926.0,412.3 L926.5,409.0 L927.0,390.2 L927.5,362.9 L928.0,385.9 L928.5,411.1 L929.0,411.9 L929.5,410.8 L930.0,395.5 L930.5,401.8 L931.0,381.8 L931.5,360.6 L932.0,373.9 L932.5,394.5 L933.0,362.0 L933.5,382.2 L934.0,412.8 L934.5,417.4 L935.0,422.2 L935.5,424.3 L936.0,419.0 L936.5,421.0 L937.0,422.1 L937.5,424.4 L938.0,420.8 L938.5,420.6 L939.0,412.0 L939.5,379.3 L940.0,373.8 L940.5,366.1 L941.0,345.0 L941.5,366.1 L942.0,372.9 L942.5,363.1 L943.0,387.9 L943.5,404.7 L944.0,395.6 L944.5,394.1 L945.0,380.7 L945.5,365.4 L946.0,383.4 L946.5,380.4 L947.0,401.8 L947.5,378.2 L948.0,392.3 L948.5,414.7 L949.0,414.6 L949.5,412.1 L950.0,417.8 L950.5,417.4 L951.0,414.7 L951.5,411.6 L952.0,400.9 L952.5,397.4 L953.0,408.4 L953.5,398.7 L954.0,391.1 L954.5,405.9 L955.0,414.7 L955.5,414.7 L956.0,414.7 L956.5,400.4 L957.0,383.8 L957.5,428.2 L958.0,425.4 L958.5,427.6 L959.0,425.8 L959.5,424.7 L960.0,416.8 L960.5,404.0 L961.0,390.0 L961.5,382.9 L962.0,359.8 L962.5,391.6 L963.0,418.3 L963.5,422.4 L964.0,417.8 L964.5,419.5 L965.0,418.4 L965.5,425.1 L966.0,418.8 L966.5,421.3 L967.0,404.0 L967.5,380.9 L968.0,356.5 L968.5,378.4 L969.0,386.5 L969.5,369.4 L970.0,351.0 L970.5,369.4 L971.0,386.5 L971.5,364.9 L972.0,384.2 L972.5,391.4 L973.0,401.6 L973.5,422.8 L974.0,424.6 L974.5,424.6 L975.0,421.5 L975.5,411.3 L976.0,400.3 L976.5,397.7 L977.0,405.0 L977.5,381.7 L978.0,369.6 L978.5,377.9 L979.0,393.8 L979.5,419.9 L980.0,422.0 L980.5,419.8 L981.0,420.1 L981.5,421.0 L982.0,420.2 L982.5,417.2 L983.0,424.1 L983.5,427.3 L984.0,426.8 L984.5,433.5 L985.0,430.8 L985.5,431.2 L986.0,418.4 L986.5,424.8 L987.0,430.3 L987.5,431.1 L988.0,419.5 L988.5,422.7 L989.0,424.7 L989.5,423.1 L990.0,428.5 L990.5,432.3 L991.0,431.5 L991.5,430.0 L992.0,421.1 L992.5,421.2 L993.0,426.2 L993.5,423.6 L994.0,421.0 L994.5,420.0 L995.0,422.6 L995.5,422.0 L996.0,431.5 L996.5,428.6 L997.0,420.9 L997.5,418.9 L998.0,418.5 L998.5,420.0 L999.0,421.3 L999.5,420.2 L1000.0,424.8 L1000.5,426.1 L1001.0,424.5 L1001.5,422.7 L1002.0,425.1 L1002.5,422.5 L1003.0,428.4 L1003.5,430.7 L1004.0,424.0 L1004.5,428.6 L1005.0,428.3 L1005.5,427.5 L1006.0,426.8 L1006.5,429.5 L1007.0,408.1 L1007.5,398.7 L1008.0,409.2 L1008.5,419.1 L1009.0,414.8 L1009.5,371.3 L1010.0,385.4 L1010.5,410.7 L1011.0,419.3 L1011.5,406.5 L1012.0,390.4 L1012.5,409.1 L1013.0,417.2 L1013.5,420.5 L1014.0,419.5 L1014.5,422.9 L1015.0,406.8 L1015.5,387.8 L1016.0,388.3 L1016.5,368.5 L1017.0,343.0 L1017.5,368.5 L1018.0,391.6 L1018.5,410.4 L1019.0,429.5 L1019.5,431.4 L1020.0,425.2 L1020.5,425.1 L1021.0,407.3 L1021.5,380.7 L1022.0,385.7 L1022.5,412.9 L1023.0,425.2 L1023.5,395.0 L1024.0,357.1 L1024.5,388.2 L1025.0,428.2 L1025.5,427.1 L1026.0,426.6 L1026.5,426.5 L1027.0,414.4 L1027.5,401.6 L1028.0,400.9 L1028.5,388.7 L1029.0,369.6 L1029.5,349.0 L1030.0,369.6 L1030.5,388.7 L1031.0,405.3 L1031.5,381.8 L1032.0,370.9 L1032.5,408.6 L1033.0,395.4 L1033.5,377.2 L1034.0,382.9 L1034.5,400.9 L1035.0,417.6 L1035.5,422.1 L1036.0,423.7 L1036.5,427.0 L1037.0,424.6 L1037.5,425.6 L1038.0,428.2 L1038.5,431.8 L1039.0,427.3 L1039.5,426.0 L1040.0,429.8 L1040.5,424.2 L1041.0,401.9 L1041.5,375.6 L1042.0,379.7 L1042.5,399.7 L1043.0,402.1 L1043.5,419.3 L1044.0,422.4 L1044.5,422.6 L1045.0,421.0 L1045.5,414.7 L1046.0,414.5 L1046.5,412.6 L1047.0,411.9 L1047.5,404.7 L1048.0,390.4 L1048.5,375.4 L1049.0,390.6 L1049.5,404.9 L1050.0,408.0 L1050.5,405.6 L1051.0,399.2 L1051.5,406.3 L1052.0,412.2 L1052.5,411.8 L1053.0,392.7 L1053.5,368.1 L1054.0,373.3 L1054.5,397.1 L1055.0,386.2 L1055.5,387.6 L1056.0,372.8 L1056.5,381.6 L1057.0,400.0 L1057.5,415.0 L1058.0,415.0 L1058.5,406.5 L1059.0,394.6 L1059.5,387.5 L1060.0,399.8 L1060.5,385.8 L1061.0,401.8 L1061.5,415.0 L1062.0,415.0 L1062.5,402.0 L1063.0,382.8 L1063.5,363.5 L1064.0,372.1 L1064.5,390.9 L1065.0,408.3 L1065.5,411.5 L1066.0,412.0 L1066.5,407.2 L1067.0,407.2 L1067.5,407.1 L1068.0,407.0 L1068.5,386.0 L1069.0,359.8 L1069.5,377.3 L1070.0,388.9 L1070.5,396.3 L1071.0,423.4 L1071.5,425.8 L1072.0,426.7 L1072.5,423.8 L1073.0,423.5 L1073.5,419.6 L1074.0,419.7 L1074.5,421.9 L1075.0,429.7 L1075.5,429.0 L1076.0,428.1 L1076.5,429.9 L1077.0,428.8 L1077.5,428.9 L1078.0,426.2 L1078.5,429.6 L1079.0,426.2 L1079.5,430.1 L1080.0,428.9 L1080.5,429.3 L1081.0,428.7 L1081.5,412.0 L1082.0,390.9 L1082.5,360.8 L1083.0,354.3 L1083.5,385.3 L1084.0,410.3 L1084.5,426.8 L1085.0,425.0 L1085.5,423.9 L1086.0,423.9 L1086.5,422.8 L1087.0,418.4 L1087.5,421.9 L1088.0,418.6 L1088.5,400.3 L1089.0,372.3 L1089.5,372.0 L1090.0,400.1 L1090.5,412.7 L1091.0,414.6 L1091.5,414.6 L1092.0,413.3 L1092.5,418.9 L1093.0,417.7 L1093.5,411.5 L1094.0,393.2 L1094.5,370.0 L1095.0,344.3 L1095.5,338.9 L1096.0,365.0 L1096.5,388.8 L1097.0,408.7 L1097.5,428.2 L1098.0,422.7 L1098.5,428.3 L1099.0,428.0 L1099.5,423.1 L1100.0,414.4 L1100.5,400.8 L1101.0,407.0 L1101.5,407.2 L1102.0,390.4 L1102.5,400.9 L1103.0,403.3 L1103.5,373.9 L1104.0,383.8 L1104.5,378.6 L1105.0,386.5 L1105.5,407.5 L1106.0,423.1 L1106.5,419.5 L1107.0,416.3 L1107.5,418.1 L1108.0,416.9 L1108.5,416.4 L1109.0,426.9 L1109.5,425.3 L1110.0,428.2 L1110.5,426.3 L1111.0,427.3 L1111.5,428.7 L1112.0,426.0 L1112.5,429.7 L1113.0,427.9 L1113.5,387.2 L1114.0,388.6 L1114.5,380.4 L1115.0,353.0 L1115.5,380.4 L1116.0,404.0 L1116.5,382.6 L1117.0,394.5 L1117.5,413.8 L1118.0,399.8 L1118.5,377.1 L1119.0,404.2 L1119.5,417.5 L1120.0,417.2' fill='none' stroke='#64b2ec' stroke-width='1.9' stroke-linejoin='round'/>
    <path d='M80.0,431.6 L80.5,431.1 L81.0,431.7 L81.5,431.9 L82.0,430.4 L82.5,432.1 L83.0,385.6 L83.5,431.7 L84.0,430.5 L84.5,430.3 L85.0,432.0 L85.5,431.2 L86.0,431.3 L86.5,432.1 L87.0,431.7 L87.5,431.6 L88.0,431.6 L88.5,430.7 L89.0,431.3 L89.5,430.4 L90.0,420.5 L90.5,431.6 L91.0,431.8 L91.5,431.7 L92.0,431.6 L92.5,431.2 L93.0,431.0 L93.5,431.9 L94.0,430.9 L94.5,431.4 L95.0,432.0 L95.5,431.5 L96.0,431.4 L96.5,430.2 L97.0,431.1 L97.5,431.0 L98.0,432.1 L98.5,430.9 L99.0,430.6 L99.5,430.9 L100.0,432.0 L100.5,398.6 L101.0,398.8 L101.5,397.0 L102.0,429.3 L102.5,431.4 L103.0,430.9 L103.5,428.9 L104.0,431.4 L104.5,412.8 L105.0,412.1 L105.5,412.8 L106.0,410.7 L106.5,411.0 L107.0,413.3 L107.5,431.8 L108.0,430.8 L108.5,394.8 L109.0,394.1 L109.5,396.6 L110.0,395.2 L110.5,395.6 L111.0,431.3 L111.5,431.8 L112.0,431.7 L112.5,430.5 L113.0,432.0 L113.5,386.3 L114.0,389.1 L114.5,387.0 L115.0,430.6 L115.5,430.0 L116.0,405.9 L116.5,405.3 L117.0,405.0 L117.5,406.4 L118.0,430.8 L118.5,430.0 L119.0,431.5 L119.5,431.8 L120.0,400.5 L120.5,401.3 L121.0,401.2 L121.5,400.4 L122.0,401.8 L122.5,400.7 L123.0,431.4 L123.5,430.4 L124.0,424.8 L124.5,430.6 L125.0,395.6 L125.5,395.9 L126.0,396.3 L126.5,394.5 L127.0,431.5 L127.5,431.0 L128.0,430.7 L128.5,399.7 L129.0,398.0 L129.5,399.1 L130.0,396.0 L130.5,398.4 L131.0,430.9 L131.5,431.3 L132.0,431.1 L132.5,408.2 L133.0,407.4 L133.5,404.9 L134.0,431.4 L134.5,430.6 L135.0,394.8 L135.5,396.3 L136.0,394.3 L136.5,430.5 L137.0,430.3 L137.5,430.5 L138.0,432.0 L138.5,431.9 L139.0,414.2 L139.5,415.0 L140.0,430.5 L140.5,429.7 L141.0,431.5 L141.5,430.2 L142.0,430.6 L142.5,429.7 L143.0,431.2 L143.5,396.5 L144.0,395.5 L144.5,397.1 L145.0,429.9 L145.5,431.3 L146.0,429.5 L146.5,431.8 L147.0,430.1 L147.5,416.0 L148.0,415.5 L148.5,415.6 L149.0,414.4 L149.5,415.5 L150.0,414.6 L150.5,431.4 L151.0,430.6 L151.5,430.9 L152.0,430.7 L152.5,413.7 L153.0,416.7 L153.5,415.5 L154.0,416.2 L154.5,430.0 L155.0,431.1 L155.5,400.3 L156.0,401.5 L156.5,401.3 L157.0,402.9 L157.5,400.0 L158.0,400.4 L158.5,431.4 L159.0,431.8 L159.5,416.1 L160.0,413.7 L160.5,413.6 L161.0,413.0 L161.5,414.9 L162.0,430.7 L162.5,431.8 L163.0,431.6 L163.5,431.7 L164.0,432.1 L164.5,398.8 L165.0,399.0 L165.5,399.2 L166.0,401.0 L166.5,400.0 L167.0,398.5 L167.5,431.9 L168.0,431.2 L168.5,431.4 L169.0,412.6 L169.5,412.2 L170.0,430.4 L170.5,431.0 L171.0,431.3 L171.5,430.4 L172.0,431.2 L172.5,431.2 L173.0,432.0 L173.5,418.5 L174.0,418.6 L174.5,417.9 L175.0,418.7 L175.5,416.3 L176.0,432.0 L176.5,430.5 L177.0,431.8 L177.5,407.8 L178.0,406.4 L178.5,407.4 L179.0,430.9 L179.5,431.5 L180.0,431.1 L180.5,418.2 L181.0,415.3 L181.5,417.0 L182.0,417.6 L182.5,415.0 L183.0,417.4 L183.5,432.0 L184.0,430.8 L184.5,431.5 L185.0,429.1 L185.5,412.3 L186.0,411.5 L186.5,430.8 L187.0,430.9 L187.5,430.8 L188.0,429.6 L188.5,431.5 L189.0,431.5 L189.5,411.8 L190.0,413.1 L190.5,412.8 L191.0,413.8 L191.5,413.8 L192.0,412.5 L192.5,430.9 L193.0,431.5 L193.5,431.8 L194.0,398.6 L194.5,399.8 L195.0,399.4 L195.5,430.5 L196.0,430.9 L196.5,432.1 L197.0,430.7 L197.5,403.5 L198.0,406.9 L198.5,404.6 L199.0,430.1 L199.5,431.7 L200.0,430.9 L200.5,431.4 L201.0,430.7 L201.5,416.3 L202.0,414.6 L202.5,414.7 L203.0,431.3 L203.5,430.6 L204.0,431.3 L204.5,429.9 L205.0,431.5 L205.5,431.5 L206.0,431.5 L206.5,431.5 L207.0,431.5 L207.5,431.5 L208.0,431.5 L208.5,431.5 L209.0,431.5 L209.5,431.5 L210.0,431.5 L210.5,431.5 L211.0,431.5 L211.5,431.5 L212.0,431.5 L212.5,431.5 L213.0,431.5 L213.5,431.1 L214.0,430.1 L214.5,430.4 L215.0,429.7 L215.5,432.0 L216.0,417.5 L216.5,415.7 L217.0,416.1 L217.5,417.3 L218.0,430.2 L218.5,429.5 L219.0,409.5 L219.5,410.5 L220.0,408.9 L220.5,431.1 L221.0,431.1 L221.5,431.9 L222.0,412.8 L222.5,413.2 L223.0,413.7 L223.5,413.2 L224.0,431.7 L224.5,430.3 L225.0,430.9 L225.5,430.7 L226.0,401.9 L226.5,400.5 L227.0,400.4 L227.5,432.1 L228.0,431.6 L228.5,430.4 L229.0,431.7 L229.5,390.2 L230.0,389.4 L230.5,389.4 L231.0,431.0 L231.5,431.9 L232.0,428.9 L232.5,429.8 L233.0,430.2 L233.5,430.4 L234.0,405.0 L234.5,431.3 L235.0,430.8 L235.5,429.9 L236.0,417.7 L236.5,418.3 L237.0,417.1 L237.5,417.7 L238.0,416.2 L238.5,429.8 L239.0,431.5 L239.5,430.7 L240.0,432.1 L240.5,432.0 L241.0,384.7 L241.5,384.6 L242.0,384.8 L242.5,430.8 L243.0,431.9 L243.5,430.3 L244.0,430.4 L244.5,384.6 L245.0,385.6 L245.5,384.6 L246.0,430.8 L246.5,430.2 L247.0,432.1 L247.5,411.3 L248.0,407.0 L248.5,409.7 L249.0,409.1 L249.5,407.5 L250.0,431.9 L250.5,430.9 L251.0,399.1 L251.5,399.1 L252.0,397.2 L252.5,431.6 L253.0,430.4 L253.5,431.9 L254.0,432.1 L254.5,430.1 L255.0,430.8 L255.5,430.3 L256.0,429.4 L256.5,431.2 L257.0,431.4 L257.5,430.1 L258.0,431.6 L258.5,378.9 L259.0,376.6 L259.5,377.7 L260.0,375.4 L260.5,377.4 L261.0,431.1 L261.5,431.9 L262.0,431.7 L262.5,430.8 L263.0,410.9 L263.5,406.7 L264.0,410.6 L264.5,429.6 L265.0,430.5 L265.5,411.5 L266.0,413.8 L266.5,411.4 L267.0,412.5 L267.5,431.2 L268.0,431.7 L268.5,431.6 L269.0,408.7 L269.5,406.4 L270.0,409.5 L270.5,430.9 L271.0,431.3 L271.5,431.1 L272.0,429.1 L272.5,431.9 L273.0,401.9 L273.5,402.8 L274.0,404.7 L274.5,430.0 L275.0,432.0 L275.5,431.0 L276.0,407.7 L276.5,409.6 L277.0,407.5 L277.5,407.1 L278.0,407.2 L278.5,431.1 L279.0,431.5 L279.5,430.6 L280.0,431.1 L280.5,428.8 L281.0,430.8 L281.5,431.1 L282.0,431.4 L282.5,379.1 L283.0,379.2 L283.5,377.5 L284.0,377.8 L284.5,379.4 L285.0,430.3 L285.5,431.8 L286.0,431.5 L286.5,431.5 L287.0,431.5 L287.5,431.5 L288.0,431.5 L288.5,431.5 L289.0,431.5 L289.5,431.5 L290.0,430.7 L290.5,430.0 L291.0,431.4 L291.5,410.9 L292.0,431.2 L292.5,420.6 L293.0,430.4 L293.5,430.2 L294.0,428.9 L294.5,415.7 L295.0,430.5 L295.5,416.0 L296.0,429.6 L296.5,431.0 L297.0,430.2 L297.5,430.7 L298.0,431.2 L298.5,431.3 L299.0,429.7 L299.5,414.6 L300.0,413.2 L300.5,413.9 L301.0,413.6 L301.5,432.0 L302.0,430.3 L302.5,416.8 L303.0,419.3 L303.5,419.5 L304.0,430.5 L304.5,430.6 L305.0,430.1 L305.5,431.4 L306.0,407.3 L306.5,407.8 L307.0,409.1 L307.5,407.8 L308.0,430.3 L308.5,428.8 L309.0,432.0 L309.5,429.9 L310.0,431.5 L310.5,410.6 L311.0,407.7 L311.5,405.9 L312.0,406.3 L312.5,405.8 L313.0,431.0 L313.5,430.7 L314.0,432.0 L314.5,431.6 L315.0,401.4 L315.5,402.5 L316.0,398.5 L316.5,430.7 L317.0,430.4 L317.5,407.2 L318.0,407.8 L318.5,408.3 L319.0,431.1 L319.5,430.9 L320.0,431.4 L320.5,430.3 L321.0,432.1 L321.5,415.8 L322.0,412.6 L322.5,413.8 L323.0,431.2 L323.5,430.7 L324.0,431.3 L324.5,430.1 L325.0,431.4 L325.5,431.0 L326.0,430.9 L326.5,431.2 L327.0,431.3 L327.5,412.2 L328.0,428.8 L328.5,424.3 L329.0,431.2 L329.5,428.5 L330.0,431.1 L330.5,430.2 L331.0,429.6 L331.5,430.8 L332.0,431.3 L332.5,431.0 L333.0,431.0 L333.5,414.8 L334.0,430.9 L334.5,420.4 L335.0,431.8 L335.5,411.5 L336.0,410.9 L336.5,411.1 L337.0,411.7 L337.5,412.0 L338.0,411.0 L338.5,410.4 L339.0,429.4 L339.5,431.2 L340.0,431.3 L340.5,399.1 L341.0,398.7 L341.5,400.7 L342.0,401.2 L342.5,431.4 L343.0,431.6 L343.5,431.1 L344.0,375.0 L344.5,378.3 L345.0,376.7 L345.5,429.3 L346.0,431.7 L346.5,430.8 L347.0,430.3 L347.5,401.5 L348.0,401.3 L348.5,429.7 L349.0,429.8 L349.5,431.1 L350.0,416.0 L350.5,415.8 L351.0,415.3 L351.5,415.6 L352.0,415.8 L352.5,414.2 L353.0,432.0 L353.5,430.3 L354.0,379.3 L354.5,380.3 L355.0,379.0 L355.5,381.8 L356.0,381.1 L356.5,431.7 L357.0,431.0 L357.5,431.6 L358.0,430.9 L358.5,402.4 L359.0,402.2 L359.5,401.7 L360.0,403.9 L360.5,403.4 L361.0,403.0 L361.5,431.6 L362.0,428.9 L362.5,430.1 L363.0,428.6 L363.5,400.5 L364.0,400.9 L364.5,430.9 L365.0,430.7 L365.5,430.4 L366.0,431.3 L366.5,422.1 L367.0,430.6 L367.5,430.9 L368.0,431.0 L368.5,430.6 L369.0,431.2 L369.5,412.5 L370.0,413.7 L370.5,412.2 L371.0,411.1 L371.5,414.3 L372.0,413.3 L372.5,430.3 L373.0,429.6 L373.5,398.5 L374.0,400.1 L374.5,399.9 L375.0,401.2 L375.5,401.1 L376.0,401.5 L376.5,431.5 L377.0,431.4 L377.5,431.4 L378.0,402.2 L378.5,403.5 L379.0,403.4 L379.5,404.4 L380.0,430.9 L380.5,430.4 L381.0,432.0 L381.5,432.0 L382.0,395.5 L382.5,394.2 L383.0,394.3 L383.5,394.2 L384.0,393.6 L384.5,394.6 L385.0,431.8 L385.5,430.5 L386.0,431.3 L386.5,430.9 L387.0,431.3 L387.5,431.8 L388.0,414.8 L388.5,414.8 L389.0,414.1 L389.5,415.8 L390.0,416.1 L390.5,432.0 L391.0,432.0 L391.5,431.8 L392.0,431.1 L392.5,410.2 L393.0,409.4 L393.5,410.2 L394.0,431.1 L394.5,430.7 L395.0,431.9 L395.5,404.1 L396.0,403.0 L396.5,403.4 L397.0,428.8 L397.5,428.5 L398.0,429.3 L398.5,431.1 L399.0,418.1 L399.5,431.2 L400.0,430.0 L400.5,430.5 L401.0,418.5 L401.5,419.5 L402.0,418.8 L402.5,417.7 L403.0,417.0 L403.5,418.1 L404.0,420.4 L404.5,431.3 L405.0,431.5 L405.5,431.5 L406.0,431.5 L406.5,431.5 L407.0,431.5 L407.5,431.5 L408.0,431.5 L408.5,431.5 L409.0,431.5 L409.5,431.5 L410.0,431.5 L410.5,431.5 L411.0,431.5 L411.5,431.5 L412.0,431.5 L412.5,431.5 L413.0,431.5 L413.5,431.7 L414.0,431.2 L414.5,403.3 L415.0,400.4 L415.5,400.2 L416.0,401.5 L416.5,402.2 L417.0,400.7 L417.5,430.0 L418.0,428.7 L418.5,431.2 L419.0,430.6 L419.5,415.9 L420.0,415.7 L420.5,416.5 L421.0,416.6 L421.5,415.5 L422.0,416.7 L422.5,430.3 L423.0,431.5 L423.5,432.0 L424.0,431.0 L424.5,431.1 L425.0,430.5 L425.5,430.6 L426.0,395.8 L426.5,395.4 L427.0,394.1 L427.5,392.9 L428.0,394.2 L428.5,391.3 L429.0,431.1 L429.5,431.6 L430.0,432.1 L430.5,431.4 L431.0,431.5 L431.5,378.9 L432.0,378.8 L432.5,377.9 L433.0,429.9 L433.5,430.3 L434.0,412.9 L434.5,413.6 L435.0,411.6 L435.5,413.0 L436.0,413.3 L436.5,412.1 L437.0,431.3 L437.5,432.0 L438.0,431.1 L438.5,430.8 L439.0,378.8 L439.5,379.1 L440.0,378.6 L440.5,431.0 L441.0,430.4 L441.5,431.3 L442.0,430.8 L442.5,431.0 L443.0,415.7 L443.5,415.8 L444.0,430.6 L444.5,408.3 L445.0,431.0 L445.5,429.4 L446.0,400.7 L446.5,398.5 L447.0,398.7 L447.5,401.2 L448.0,399.6 L448.5,401.0 L449.0,399.6 L449.5,431.6 L450.0,432.0 L450.5,431.6 L451.0,431.3 L451.5,431.1 L452.0,416.1 L452.5,415.7 L453.0,416.4 L453.5,417.8 L454.0,414.3 L454.5,416.1 L455.0,430.7 L455.5,431.7 L456.0,431.8 L456.5,430.1 L457.0,430.9 L457.5,408.7 L458.0,406.5 L458.5,408.8 L459.0,431.7 L459.5,431.3 L460.0,405.1 L460.5,405.2 L461.0,404.0 L461.5,403.1 L462.0,404.6 L462.5,431.0 L463.0,432.1 L463.5,431.5 L464.0,431.4 L464.5,431.5 L465.0,408.0 L465.5,406.8 L466.0,408.2 L466.5,406.9 L467.0,432.0 L467.5,431.9 L468.0,410.1 L468.5,411.3 L469.0,408.9 L469.5,411.2 L470.0,409.4 L470.5,409.2 L471.0,430.8 L471.5,431.4 L472.0,431.5 L472.5,431.3 L473.0,431.2 L473.5,428.7 L474.0,430.5 L474.5,419.2 L475.0,419.5 L475.5,419.7 L476.0,431.0 L476.5,431.1 L477.0,409.9 L477.5,410.1 L478.0,409.5 L478.5,431.1 L479.0,431.3 L479.5,432.1 L480.0,431.5 L480.5,431.5 L481.0,431.5 L481.5,431.5 L482.0,431.5 L482.5,431.5 L483.0,431.5 L483.5,431.5 L484.0,431.5 L484.5,431.5 L485.0,431.5 L485.5,431.5 L486.0,431.5 L486.5,405.4 L487.0,406.2 L487.5,406.1 L488.0,431.7 L488.5,431.8 L489.0,431.8 L489.5,417.7 L490.0,418.9 L490.5,430.9 L491.0,431.0 L491.5,431.1 L492.0,430.4 L492.5,430.6 L493.0,431.4 L493.5,431.5 L494.0,430.0 L494.5,416.5 L495.0,414.1 L495.5,416.6 L496.0,415.1 L496.5,415.8 L497.0,431.6 L497.5,432.1 L498.0,430.7 L498.5,431.5 L499.0,429.8 L499.5,403.3 L500.0,402.2 L500.5,402.6 L501.0,405.5 L501.5,431.7 L502.0,431.5 L502.5,431.7 L503.0,415.5 L503.5,415.0 L504.0,415.2 L504.5,431.1 L505.0,430.9 L505.5,402.3 L506.0,401.5 L506.5,404.2 L507.0,403.9 L507.5,403.5 L508.0,430.4 L508.5,432.0 L509.0,431.2 L509.5,430.9 L510.0,430.9 L510.5,397.4 L511.0,395.9 L511.5,397.2 L512.0,395.7 L512.5,397.8 L513.0,398.4 L513.5,397.8 L514.0,431.1 L514.5,429.6 L515.0,431.6 L515.5,400.5 L516.0,401.7 L516.5,401.1 L517.0,430.6 L517.5,430.7 L518.0,430.4 L518.5,411.5 L519.0,430.4 L519.5,431.0 L520.0,403.5 L520.5,402.3 L521.0,401.0 L521.5,430.0 L522.0,431.2 L522.5,415.4 L523.0,415.5 L523.5,414.4 L524.0,416.4 L524.5,430.9 L525.0,431.0 L525.5,429.6 L526.0,430.5 L526.5,429.7 L527.0,412.8 L527.5,413.3 L528.0,412.6 L528.5,430.8 L529.0,431.7 L529.5,430.4 L530.0,404.7 L530.5,406.6 L531.0,407.9 L531.5,407.1 L532.0,407.6 L532.5,406.0 L533.0,430.3 L533.5,431.7 L534.0,431.2 L534.5,401.5 L535.0,400.8 L535.5,399.6 L536.0,400.1 L536.5,431.4 L537.0,431.3 L537.5,431.3 L538.0,431.5 L538.5,431.5 L539.0,431.5 L539.5,430.1 L540.0,430.9 L540.5,430.7 L541.0,430.0 L541.5,429.4 L542.0,430.2 L542.5,430.2 L543.0,430.6 L543.5,430.5 L544.0,431.1 L544.5,431.2 L545.0,422.7 L545.5,429.5 L546.0,430.6 L546.5,429.7 L547.0,415.8 L547.5,430.0 L548.0,429.8 L548.5,430.6 L549.0,431.1 L549.5,413.3 L550.0,430.9 L550.5,430.0 L551.0,431.1 L551.5,431.4 L552.0,429.6 L552.5,385.6 L553.0,384.6 L553.5,385.6 L554.0,384.0 L554.5,383.6 L555.0,386.3 L555.5,430.7 L556.0,431.2 L556.5,413.4 L557.0,412.2 L557.5,414.2 L558.0,413.2 L558.5,411.9 L559.0,410.3 L559.5,413.1 L560.0,432.0 L560.5,431.3 L561.0,431.9 L561.5,431.9 L562.0,407.1 L562.5,409.3 L563.0,407.9 L563.5,406.6 L564.0,431.0 L564.5,430.7 L565.0,431.4 L565.5,432.0 L566.0,430.1 L566.5,391.3 L567.0,428.6 L567.5,429.6 L568.0,429.6 L568.5,430.1 L569.0,427.2 L569.5,428.7 L570.0,429.8 L570.5,428.9 L571.0,429.4 L571.5,428.2 L572.0,427.4 L572.5,426.8 L573.0,429.5 L573.5,429.9 L574.0,429.7 L574.5,428.4 L575.0,429.4 L575.5,429.5 L576.0,430.0 L576.5,429.6 L577.0,428.9 L577.5,428.3 M581.0,430.3 L581.5,430.5 L582.0,431.4 L582.5,431.0 L583.0,430.8 L583.5,431.3 L584.0,399.8 L584.5,430.8 L585.0,430.3 L585.5,430.7 L586.0,431.2 L586.5,429.9 L587.0,431.2 L587.5,430.7 L588.0,431.2 L588.5,431.0 L589.0,430.6 L589.5,431.1 L590.0,431.3 L590.5,430.7 L591.0,431.1 L591.5,429.4 L592.0,430.6 L592.5,431.2 L593.0,431.3 L593.5,431.1 L594.0,430.9 L594.5,318.3 L595.0,431.4 L595.5,431.3 L596.0,431.2 L596.5,430.4 L597.0,430.2 L597.5,430.6 L598.0,431.1 L598.5,431.1 L599.0,431.1 L599.5,431.1 L600.0,431.1 L600.5,430.7 L601.0,430.5 L601.5,431.1 L602.0,430.2 L602.5,431.3 L603.0,403.7 L603.5,431.4 L604.0,431.5 L604.5,431.2 L605.0,429.3 L605.5,412.7 L606.0,430.9 L606.5,430.1 L607.0,430.8 L607.5,430.8 L608.0,430.7 L608.5,430.7 L609.0,431.3 L609.5,430.6 L610.0,430.1 L610.5,431.2 L611.0,429.9 L611.5,430.0 L612.0,430.7 L612.5,429.8 L613.0,429.8 L613.5,431.1 L614.0,431.0 L614.5,430.1 L615.0,429.8 L615.5,431.0 L616.0,431.4 L616.5,430.3 L617.0,430.2 L617.5,430.4 L618.0,431.0 L618.5,430.6 L619.0,431.3 L619.5,430.8 L620.0,431.1 L620.5,430.9 L621.0,431.1 L621.5,431.1 L622.0,430.9 L622.5,431.4 L623.0,431.3 L623.5,430.7 L624.0,430.5 L624.5,431.3 L625.0,431.4 L625.5,430.7 L626.0,430.7 L626.5,430.3 L627.0,430.5 L627.5,431.5 L628.0,431.4 L628.5,430.5 L629.0,431.4 L629.5,430.6 L630.0,431.5 L630.5,431.1 L631.0,430.7 L631.5,431.3 L632.0,429.4 L632.5,431.2 L633.0,431.5 L633.5,430.6 L634.0,431.1 L634.5,430.8 L635.0,431.1 L635.5,430.6 L636.0,431.0 L636.5,430.4 L637.0,430.8 L637.5,430.8 L638.0,430.6 L638.5,430.6 L639.0,430.9 L639.5,430.6 L640.0,431.1 L640.5,429.8 L641.0,429.8 L641.5,429.7 L642.0,430.9 L642.5,430.9 L643.0,430.5 L643.5,431.2 L644.0,402.9 L644.5,402.7 L645.0,403.5 L645.5,431.0 L646.0,431.7 L646.5,432.0 L647.0,430.4 L647.5,431.6 L648.0,404.3 L648.5,405.4 L649.0,406.1 L649.5,405.2 L650.0,405.4 L650.5,405.4 L651.0,430.9 L651.5,432.0 L652.0,430.1 L652.5,430.7 L653.0,416.7 L653.5,415.7 L654.0,418.0 L654.5,416.7 L655.0,429.8 L655.5,431.2 L656.0,431.0 L656.5,405.9 L657.0,404.7 L657.5,407.0 L658.0,405.6 L658.5,405.9 L659.0,431.8 L659.5,431.8 L660.0,402.2 L660.5,403.2 L661.0,400.8 L661.5,431.9 L662.0,431.6 L662.5,430.9 L663.0,431.5 L663.5,432.0 L664.0,431.3 L664.5,430.4 L665.0,431.3 L665.5,430.3 L666.0,430.8 L666.5,431.4 L667.0,430.8 L667.5,431.3 L668.0,431.9 L668.5,415.1 L669.0,417.6 L669.5,415.8 L670.0,415.5 L670.5,428.1 L671.0,431.8 L671.5,407.6 L672.0,406.3 L672.5,405.9 L673.0,407.5 L673.5,430.4 L674.0,432.0 L674.5,431.0 L675.0,412.1 L675.5,409.4 L676.0,409.6 L676.5,409.8 L677.0,410.8 L677.5,410.5 L678.0,411.4 L678.5,431.8 L679.0,431.3 L679.5,415.4 L680.0,416.3 L680.5,416.1 L681.0,413.7 L681.5,414.9 L682.0,431.4 L682.5,431.5 L683.0,431.8 L683.5,397.8 L684.0,400.3 L684.5,400.1 L685.0,430.4 L685.5,431.5 L686.0,430.5 L686.5,431.3 L687.0,429.4 L687.5,431.5 L688.0,430.1 L688.5,431.1 L689.0,431.4 L689.5,395.7 L690.0,396.6 L690.5,394.8 L691.0,395.0 L691.5,394.3 L692.0,431.5 L692.5,431.6 L693.0,432.0 L693.5,414.4 L694.0,415.3 L694.5,415.7 L695.0,413.3 L695.5,431.8 L696.0,430.1 L696.5,430.1 L697.0,431.3 L697.5,430.2 L698.0,402.6 L698.5,404.0 L699.0,402.3 L699.5,431.4 L700.0,430.8 L700.5,398.9 L701.0,399.5 L701.5,399.8 L702.0,431.1 L702.5,429.2 L703.0,429.2 L703.5,400.3 L704.0,401.3 L704.5,400.4 L705.0,400.9 L705.5,430.9 L706.0,431.9 L706.5,431.4 L707.0,431.1 L707.5,431.1 L708.0,415.2 L708.5,414.3 L709.0,416.7 L709.5,431.5 L710.0,428.9 L710.5,431.1 L711.0,416.0 L711.5,415.6 L712.0,417.0 L712.5,429.6 L713.0,430.9 L713.5,428.8 L714.0,431.9 L714.5,429.8 L715.0,401.3 L715.5,401.9 L716.0,399.1 L716.5,430.8 L717.0,431.4 L717.5,431.0 L718.0,396.4 L718.5,396.0 L719.0,397.6 L719.5,394.7 L720.0,394.0 L720.5,395.0 L721.0,430.4 L721.5,430.4 L722.0,417.0 L722.5,415.7 L723.0,419.0 L723.5,416.5 L724.0,417.9 L724.5,417.8 L725.0,417.0 L725.5,432.0 L726.0,428.2 L726.5,430.2 L727.0,431.7 L727.5,399.4 L728.0,399.1 L728.5,397.5 L729.0,400.7 L729.5,398.9 L730.0,430.9 L730.5,430.1 L731.0,431.3 L731.5,412.2 L732.0,430.7 L732.5,431.3 L733.0,411.8 L733.5,431.2 L734.0,429.4 L734.5,401.6 L735.0,401.7 L735.5,404.1 L736.0,403.0 L736.5,401.1 L737.0,401.1 L737.5,399.0 L738.0,431.6 L738.5,430.6 L739.0,430.2 L739.5,398.1 L740.0,397.6 L740.5,397.1 L741.0,396.1 L741.5,397.0 L742.0,398.2 L742.5,398.0 L743.0,431.8 L743.5,431.8 L744.0,430.7 L744.5,396.1 L745.0,395.7 L745.5,393.2 L746.0,395.3 L746.5,431.4 L747.0,430.8 L747.5,432.1 L748.0,431.9 L748.5,431.2 L749.0,408.8 L749.5,410.1 L750.0,409.7 L750.5,409.3 L751.0,410.7 L751.5,430.9 L752.0,432.0 L752.5,431.5 L753.0,400.2 L753.5,400.8 L754.0,402.0 L754.5,401.1 L755.0,401.3 L755.5,432.1 L756.0,431.0 L756.5,399.1 L757.0,403.0 L757.5,399.3 L758.0,399.3 L758.5,429.0 L759.0,429.9 L759.5,430.9 L760.0,420.3 L760.5,429.2 L761.0,430.8 L761.5,416.3 L762.0,419.7 L762.5,418.5 L763.0,418.1 L763.5,417.5 L764.0,418.3 L764.5,430.5 L765.0,430.7 L765.5,431.7 L766.0,416.1 L766.5,419.3 L767.0,418.8 L767.5,415.7 L768.0,418.3 L768.5,430.5 L769.0,429.6 L769.5,429.8 L770.0,431.0 L770.5,404.4 L771.0,402.9 L771.5,403.5 L772.0,404.2 L772.5,431.1 L773.0,430.6 L773.5,389.6 L774.0,387.4 L774.5,387.7 L775.0,387.7 L775.5,388.7 L776.0,388.5 L776.5,431.5 L777.0,430.9 L777.5,431.3 L778.0,402.8 L778.5,402.5 L779.0,430.1 L779.5,423.9 L780.0,431.1 L780.5,431.4 L781.0,430.1 L781.5,430.5 L782.0,431.1 L782.5,429.4 L783.0,430.0 L783.5,421.7 L784.0,431.2 L784.5,416.9 L785.0,430.7 L785.5,430.6 L786.0,429.2 L786.5,429.8 L787.0,431.4 L787.5,431.3 L788.0,429.8 L788.5,406.3 L789.0,430.0 L789.5,412.7 L790.0,430.5 L790.5,430.2 L791.0,430.3 L791.5,407.9 L792.0,429.4 L792.5,405.2 L793.0,430.0 L793.5,418.0 L794.0,430.7 L794.5,430.9 L795.0,430.7 L795.5,431.2 L796.0,431.3 L796.5,431.3 L797.0,430.4 L797.5,429.0 L798.0,431.2 L798.5,430.2 L799.0,428.7 L799.5,429.3 L800.0,388.8 L800.5,389.8 L801.0,389.2 L801.5,389.1 L802.0,391.3 L802.5,431.7 L803.0,431.4 L803.5,431.8 L804.0,431.0 L804.5,431.5 L805.0,414.5 L805.5,414.2 L806.0,415.9 L806.5,416.5 L807.0,416.3 L807.5,413.5 L808.0,430.1 L808.5,430.8 L809.0,431.2 L809.5,431.9 L810.0,431.6 L810.5,414.2 L811.0,413.5 L811.5,414.6 L812.0,430.4 L812.5,430.0 L813.0,431.5 L813.5,431.6 L814.0,431.8 L814.5,406.4 L815.0,405.0 L815.5,408.6 L816.0,403.8 L816.5,405.4 L817.0,430.7 L817.5,431.4 L818.0,431.1 L818.5,430.7 L819.0,382.9 L819.5,385.6 L820.0,431.5 L820.5,431.2 L821.0,431.2 L821.5,430.8 L822.0,431.4 L822.5,431.3 L823.0,410.2 L823.5,410.9 L824.0,409.6 L824.5,430.6 L825.0,432.1 L825.5,395.6 L826.0,395.9 L826.5,395.4 L827.0,397.5 L827.5,432.0 L828.0,431.5 L828.5,430.5 L829.0,430.7 L829.5,406.6 L830.0,405.9 L830.5,407.7 L831.0,406.1 L831.5,407.4 L832.0,408.6 L832.5,408.2 L833.0,430.6 L833.5,431.0 L834.0,411.1 L834.5,408.6 L835.0,408.5 L835.5,410.0 L836.0,431.7 L836.5,431.3 L837.0,406.0 L837.5,430.7 L838.0,431.3 L838.5,428.3 L839.0,429.8 L839.5,431.2 L840.0,431.1 L840.5,397.1 L841.0,396.1 L841.5,397.7 L842.0,398.6 L842.5,395.8 L843.0,397.1 L843.5,431.7 L844.0,431.8 L844.5,431.1 L845.0,431.8 L845.5,403.8 L846.0,403.1 L846.5,404.7 L847.0,432.1 L847.5,431.4 L848.0,430.1 L848.5,429.5 L849.0,430.0 L849.5,431.1 L850.0,417.1 L850.5,431.4 L851.0,431.0 L851.5,430.6 L852.0,396.5 L852.5,394.8 L853.0,396.6 L853.5,432.1 L854.0,430.0 L854.5,431.5 L855.0,431.7 L855.5,431.6 L856.0,408.8 L856.5,409.0 L857.0,409.8 L857.5,410.4 L858.0,409.4 L858.5,408.6 L859.0,430.5 L859.5,431.3 L860.0,401.6 L860.5,402.0 L861.0,400.9 L861.5,398.7 L862.0,432.0 L862.5,430.7 L863.0,431.0 L863.5,411.1 L864.0,409.2 L864.5,409.8 L865.0,409.7 L865.5,408.9 L866.0,430.2 L866.5,430.6 L867.0,415.3 L867.5,414.5 L868.0,414.5 L868.5,413.7 L869.0,414.2 L869.5,430.1 L870.0,431.9 L870.5,397.1 L871.0,396.7 L871.5,395.9 L872.0,432.1 L872.5,430.3 L873.0,431.8 L873.5,430.5 L874.0,397.4 L874.5,397.4 L875.0,397.2 L875.5,430.1 L876.0,429.7 L876.5,418.1 L877.0,431.1 L877.5,430.6 L878.0,375.8 L878.5,376.8 L879.0,377.8 L879.5,377.5 L880.0,378.6 L880.5,377.6 L881.0,378.1 L881.5,431.4 L882.0,431.2 L882.5,378.2 L883.0,378.5 L883.5,380.7 L884.0,377.6 L884.5,431.5 L885.0,431.1 L885.5,431.0 L886.0,431.6 L886.5,411.9 L887.0,429.7 L887.5,430.2 L888.0,431.3 L888.5,411.4 L889.0,431.3 L889.5,431.4 L890.0,431.2 L890.5,382.1 L891.0,379.5 L891.5,381.4 L892.0,379.7 L892.5,382.4 L893.0,431.8 L893.5,430.6 L894.0,412.2 L894.5,414.3 L895.0,412.0 L895.5,430.4 L896.0,431.2 L896.5,431.0 L897.0,431.0 L897.5,431.9 L898.0,392.6 L898.5,429.8 L899.0,431.0 L899.5,430.8 L900.0,430.4 L900.5,431.1 L901.0,431.4 L901.5,403.8 L902.0,403.5 L902.5,402.9 L903.0,402.7 L903.5,431.1 L904.0,430.8 L904.5,431.8 L905.0,429.9 L905.5,430.9 L906.0,393.2 L906.5,392.5 L907.0,393.4 L907.5,394.2 L908.0,393.8 L908.5,393.3 L909.0,431.6 L909.5,430.5 L910.0,432.1 L910.5,430.6 L911.0,403.8 L911.5,404.6 L912.0,405.0 L912.5,404.9 L913.0,405.8 L913.5,404.3 L914.0,430.2 L914.5,432.0 L915.0,408.0 L915.5,407.5 L916.0,409.8 L916.5,431.6 L917.0,430.4 L917.5,430.9 L918.0,431.1 L918.5,431.9 L919.0,417.1 L919.5,419.0 L920.0,431.2 L920.5,431.4 L921.0,430.8 L921.5,431.0 L922.0,429.4 L922.5,431.6 L923.0,399.1 L923.5,396.1 L924.0,396.3 L924.5,398.2 L925.0,396.4 L925.5,431.6 L926.0,431.8 L926.5,431.9 L927.0,430.5 L927.5,430.7 L928.0,405.9 L928.5,404.1 L929.0,407.4 L929.5,403.1 L930.0,430.5 L930.5,431.1 L931.0,430.1 L931.5,430.8 L932.0,429.3 L932.5,396.2 L933.0,394.5 L933.5,392.8 L934.0,396.5 L934.5,394.3 L935.0,431.1 L935.5,431.4 L936.0,431.2 L936.5,430.2 L937.0,429.8 L937.5,430.2 L938.0,430.1 L938.5,430.6 L939.0,430.0 L939.5,431.8 L940.0,408.2 L940.5,406.6 L941.0,407.5 L941.5,409.6 L942.0,410.9 L942.5,430.4 L943.0,430.8 L943.5,417.0 L944.0,416.4 L944.5,415.9 L945.0,416.0 L945.5,417.2 L946.0,432.0 L946.5,431.7 L947.0,431.2 L947.5,415.5 L948.0,416.6 L948.5,416.3 L949.0,414.2 L949.5,414.9 L950.0,431.8 L950.5,431.4 L951.0,431.0 L951.5,431.9 L952.0,418.4 L952.5,416.5 L953.0,418.7 L953.5,417.9 L954.0,418.8 L954.5,432.0 L955.0,432.0 L955.5,431.8 L956.0,430.2 L956.5,431.7 L957.0,399.7 L957.5,430.5 L958.0,430.8 L958.5,420.5 L959.0,429.4 L959.5,431.5 L960.0,398.8 L960.5,403.4 L961.0,400.8 L961.5,400.7 L962.0,400.8 L962.5,399.5 L963.0,399.2 L963.5,431.3 L964.0,432.1 L964.5,431.8 L965.0,400.8 L965.5,401.6 L966.0,400.6 L966.5,431.8 L967.0,430.1 L967.5,431.5 L968.0,416.0 L968.5,417.0 L969.0,415.5 L969.5,414.0 L970.0,430.8 L970.5,431.7 L971.0,403.8 L971.5,401.0 L972.0,401.8 L972.5,403.0 L973.0,430.4 L973.5,431.4 L974.0,405.2 L974.5,404.6 L975.0,405.4 L975.5,405.0 L976.0,406.5 L976.5,431.5 L977.0,430.0 L977.5,429.5 L978.0,430.6 L978.5,402.7 L979.0,402.1 L979.5,404.2 L980.0,432.0 L980.5,430.3 L981.0,418.2 L981.5,415.5 L982.0,418.5 L982.5,416.3 L983.0,431.3 L983.5,430.5 L984.0,431.1 L984.5,430.3 L985.0,431.1 L985.5,411.0 L986.0,431.4 L986.5,430.7 L987.0,430.2 L987.5,418.0 L988.0,430.1 L988.5,413.0 L989.0,431.4 L989.5,417.4 L990.0,430.2 L990.5,431.0 L991.0,430.2 L991.5,430.7 L992.0,431.4 L992.5,430.1 L993.0,429.4 L993.5,419.3 L994.0,431.2 L994.5,431.1 L995.0,430.3 L995.5,415.3 L996.0,430.2 L996.5,419.4 L997.0,429.0 L997.5,431.2 L998.0,431.1 L998.5,430.9 L999.0,431.2 L999.5,420.1 L1000.0,430.1 L1000.5,430.3 L1001.0,430.9 L1001.5,430.6 L1002.0,431.0 L1002.5,430.5 L1003.0,429.0 L1003.5,430.2 L1004.0,431.1 L1004.5,417.3 L1005.0,431.0 L1005.5,430.0 L1006.0,428.6 L1006.5,430.4 L1007.0,396.1 L1007.5,393.7 L1008.0,397.0 L1008.5,431.2 L1009.0,431.2 L1009.5,431.4 L1010.0,431.8 L1010.5,431.2 L1011.0,407.0 L1011.5,406.9 L1012.0,406.3 L1012.5,431.5 L1013.0,431.4 L1013.5,431.0 L1014.0,432.1 L1014.5,402.9 L1015.0,403.1 L1015.5,401.6 L1016.0,402.1 L1016.5,402.3 L1017.0,403.6 L1017.5,432.0 L1018.0,431.6 L1018.5,431.4 L1019.0,431.6 L1019.5,412.4 L1020.0,412.0 L1020.5,410.9 L1021.0,412.6 L1021.5,431.9 L1022.0,431.3 L1022.5,429.7 L1023.0,396.9 L1023.5,399.7 L1024.0,397.7 L1024.5,398.8 L1025.0,430.2 L1025.5,429.3 L1026.0,431.0 L1026.5,431.4 L1027.0,394.7 L1027.5,395.8 L1028.0,394.8 L1028.5,395.7 L1029.0,395.7 L1029.5,431.7 L1030.0,431.4 L1030.5,431.9 L1031.0,431.3 L1031.5,388.7 L1032.0,389.2 L1032.5,388.5 L1033.0,429.9 L1033.5,428.7 L1034.0,432.1 L1034.5,431.9 L1035.0,399.6 L1035.5,399.5 L1036.0,399.7 L1036.5,398.8 L1037.0,400.6 L1037.5,400.4 L1038.0,431.5 L1038.5,431.6 L1039.0,430.9 L1039.5,431.3 L1040.0,406.8 L1040.5,405.6 L1041.0,406.2 L1041.5,405.4 L1042.0,409.2 L1042.5,429.9 L1043.0,431.2 L1043.5,431.4 L1044.0,430.9 L1044.5,414.3 L1045.0,430.8 L1045.5,432.0 L1046.0,396.3 L1046.5,396.2 L1047.0,395.8 L1047.5,395.8 L1048.0,395.1 L1048.5,396.8 L1049.0,431.1 L1049.5,431.6 L1050.0,432.1 L1050.5,398.1 L1051.0,400.8 L1051.5,400.3 L1052.0,428.9 L1052.5,430.7 L1053.0,431.5 L1053.5,431.3 L1054.0,400.6 L1054.5,399.9 L1055.0,400.4 L1055.5,430.7 L1056.0,431.8 L1056.5,411.1 L1057.0,411.9 L1057.5,413.3 L1058.0,411.6 L1058.5,412.3 L1059.0,412.1 L1059.5,411.9 L1060.0,431.0 L1060.5,431.8 L1061.0,430.2 L1061.5,431.6 L1062.0,380.2 L1062.5,379.3 L1063.0,378.1 L1063.5,379.4 L1064.0,378.9 L1064.5,431.5 L1065.0,430.4 L1065.5,430.2 L1066.0,430.5 L1066.5,396.2 L1067.0,394.4 L1067.5,394.8 L1068.0,394.9 L1068.5,430.6 L1069.0,430.9 L1069.5,431.4 L1070.0,405.5 L1070.5,404.5 L1071.0,429.1 L1071.5,430.5 L1072.0,430.7 L1072.5,404.3 L1073.0,406.4 L1073.5,404.7 L1074.0,406.1 L1074.5,431.2 L1075.0,431.5 L1075.5,431.5 L1076.0,431.5 L1076.5,431.5 L1077.0,431.5 L1077.5,431.5 L1078.0,431.5 L1078.5,431.5 L1079.0,431.5 L1079.5,431.5 L1080.0,431.5 L1080.5,431.5 L1081.0,431.5 L1081.5,430.8 L1082.0,410.3 L1082.5,430.0 L1083.0,428.5 L1083.5,429.7 L1084.0,431.4 L1084.5,430.8 L1085.0,429.8 L1085.5,431.2 L1086.0,430.1 L1086.5,431.0 L1087.0,395.7 L1087.5,396.5 L1088.0,395.6 L1088.5,397.6 L1089.0,396.8 L1089.5,396.7 L1090.0,397.3 L1090.5,431.6 L1091.0,431.8 L1091.5,419.9 L1092.0,418.9 L1092.5,417.7 L1093.0,418.4 L1093.5,418.5 L1094.0,431.8 L1094.5,431.0 L1095.0,431.7 L1095.5,431.9 L1096.0,431.1 L1096.5,394.8 L1097.0,397.1 L1097.5,396.8 L1098.0,394.8 L1098.5,395.6 L1099.0,394.4 L1099.5,431.2 L1100.0,430.4 L1100.5,431.2 L1101.0,404.5 L1101.5,406.4 L1102.0,404.5 L1102.5,404.3 L1103.0,402.7 L1103.5,401.7 L1104.0,431.6 L1104.5,429.8 L1105.0,431.1 L1105.5,431.9 L1106.0,411.1 L1106.5,410.9 L1107.0,411.1 L1107.5,411.8 L1108.0,432.1 L1108.5,430.0 L1109.0,430.8 L1109.5,430.0 L1110.0,430.3 L1110.5,430.2 L1111.0,431.3 L1111.5,431.4 L1112.0,431.1 L1112.5,430.7 L1113.0,431.2 L1113.5,387.6 L1114.0,387.1 L1114.5,385.9 L1115.0,386.2 L1115.5,431.3 L1116.0,431.9 L1116.5,432.0 L1117.0,429.8 L1117.5,400.6 L1118.0,398.7 L1118.5,401.3 L1119.0,430.9 L1119.5,432.1 L1120.0,431.2' fill='none' stroke='#dadada' stroke-width='0.85' stroke-linejoin='miter' stroke-opacity='0.9'/>
  </g>
  <line x1='80' y1='436.5' x2='1120.5' y2='436.5' stroke='#8c8c8c' stroke-width='1'/>
  <line x1='79.5' y1='436' x2='79.5' y2='441.5' stroke='#9a9a9a' stroke-width='1'/><line x1='150.5' y1='436' x2='150.5' y2='441.5' stroke='#9a9a9a' stroke-width='1'/><line x1='221.5' y1='436' x2='221.5' y2='441.5' stroke='#9a9a9a' stroke-width='1'/><line x1='292.5' y1='436' x2='292.5' y2='441.5' stroke='#9a9a9a' stroke-width='1'/><line x1='363.5' y1='436' x2='363.5' y2='441.5' stroke='#9a9a9a' stroke-width='1'/><line x1='434.5' y1='436' x2='434.5' y2='441.5' stroke='#9a9a9a' stroke-width='1'/><line x1='505.5' y1='436' x2='505.5' y2='441.5' stroke='#9a9a9a' stroke-width='1'/><line x1='576.5' y1='436' x2='576.5' y2='441.5' stroke='#9a9a9a' stroke-width='1'/><line x1='647.5' y1='436' x2='647.5' y2='441.5' stroke='#9a9a9a' stroke-width='1'/><line x1='718.5' y1='436' x2='718.5' y2='441.5' stroke='#9a9a9a' stroke-width='1'/><line x1='789.5' y1='436' x2='789.5' y2='441.5' stroke='#9a9a9a' stroke-width='1'/><line x1='860.5' y1='436' x2='860.5' y2='441.5' stroke='#9a9a9a' stroke-width='1'/><line x1='931.5' y1='436' x2='931.5' y2='441.5' stroke='#9a9a9a' stroke-width='1'/><line x1='1002.5' y1='436' x2='1002.5' y2='441.5' stroke='#9a9a9a' stroke-width='1'/><line x1='1073.5' y1='436' x2='1073.5' y2='441.5' stroke='#9a9a9a' stroke-width='1'/>
  <rect x='1117.2' y='300' width='1.6' height='136.5' fill='#1c1c1c'/>
  <!-- legend -->
  <line x1='532.7' y1='473.8' x2='543.3' y2='473.8' stroke='#62aeea' stroke-width='1.5'/>
  <line x1='583.7' y1='473.8' x2='594' y2='473.8' stroke='#aaaaaa' stroke-width='1.5'/>
</svg>

  <!-- slider -->
  <div class="abs" style="left:30px;top:509px;width:1139px;height:12px;background:#dfe2e6;border-radius:3px"></div>
  <div class="abs" style="left:38.3px;top:509px;width:1123.5px;height:12px;background:#e75569"></div>
  <div class="abs" style="left:37.8px;top:506px;width:1.8px;height:18px;background:#e75569"></div>
  <div class="abs" style="left:1161px;top:506px;width:1.8px;height:18px;background:#e75569"></div>
  <div class="abs" style="left:31px;top:492.3px;width:15px;height:9.5px;background:#e75569;border-radius:2px"></div>
  <svg class="abs" style="left:35px;top:501px" width="8" height="4"><polygon points="1,0 7,0 4,3" fill="#e75569"/></svg>
  <div class="abs" style="left:1135px;top:492.3px;width:35px;height:9.5px;background:#e75569;border-radius:2px"></div>
  <svg class="abs" style="left:1148.5px;top:501px" width="8" height="4"><polygon points="1,0 7,0 4,3" fill="#e75569"/></svg>

  <!-- bottom panels -->
  <div class="panel" style="left:10.8px;top:572.7px;width:579px;height:240px"></div>
  <div class="panel" style="left:610.4px;top:572.7px;width:578.7px;height:240px"></div>
  <div class="row" style="top:612.5px;height:23.1px;background:#2d2d2d"></div>
  <div class="row" style="top:635.6px;height:1.5px;background:#191919"></div>
  <div class="row" style="top:637.1px;height:21.5px;background:#222222"></div>
  <div class="row" style="top:658.6px;height:1.5px;background:#191919"></div>
  <div class="row" style="top:660.1px;height:26.2px;background:#2d2d2d"></div>
  <div class="row" style="top:686.3px;height:1.5px;background:#191919"></div>
  <div class="row" style="top:687.8px;height:25.5px;background:#222222"></div>
  <div class="row" style="top:713.3px;height:1.5px;background:#191919"></div>
  <div class="row" style="top:714.8px;height:25.5px;background:#2d2d2d"></div>
  <div class="row" style="top:740.3px;height:1.5px;background:#191919"></div>
  <div class="row" style="top:741.8px;height:25.5px;background:#222222"></div>
  <div class="row" style="top:767.3px;height:1.5px;background:#191919"></div>
  <div class="row" style="top:768.8px;height:25.7px;background:#2d2d2d"></div>
  <div class="row" style="top:794.5px;height:1.5px;background:#191919"></div>
  <div class="track" style="top:680px"><div class="fill" style="width:203.5px"></div></div>
  <div class="track" style="top:707px"><div class="fill" style="width:21.3px"></div></div>
  <div class="track" style="top:734px"><div class="fill" style="width:7.5px"></div></div>
  <div class="track" style="top:761.5px"><div class="fill" style="width:21.5px;height:1.2px;top:1.5px"></div><div class="fill" style="width:3px"></div></div>
  <div class="track" style="top:788.5px"></div>

  <!-- pie -->
  <svg class="abs" style="left:0;top:0" width="1200" height="800">
    <path d='M900.00,641.80 A62.2,62.2 0 1 1 855.52,660.53 L882.41,686.81 A24.6,24.6 0 1 0 900.00,679.40 Z' fill='#4caf50'/>
<path d='M855.52,660.53 A62.2,62.2 0 0 1 884.26,643.83 L893.77,680.20 A24.6,24.6 0 0 0 882.41,686.81 Z' fill='#ffeb5b'/>
<path d='M884.26,643.83 A62.2,62.2 0 0 1 894.77,642.02 L897.93,679.49 A24.6,24.6 0 0 0 893.77,680.20 Z' fill='#f39c1f'/>
<path d='M894.77,642.02 A62.2,62.2 0 0 1 898.86,641.81 L899.55,679.40 A24.6,24.6 0 0 0 897.93,679.49 Z' fill='#e53935'/>
<path d='M898.86,641.81 A62.2,62.2 0 0 1 900.00,641.80 L900.00,679.40 A24.6,24.6 0 0 0 899.55,679.40 Z' fill='#c62828'/>
<g fill='none' stroke-width='1'><path d='M924,761.5 Q928,776 934.8,779.5' stroke='#4caf50'/><path d='M868.1,649.1 L864,643.3 L818.3,677.7' stroke='#d4b800'/><path d='M889.1,641.5 L886.8,634.5 L827.3,659' stroke='#e68a00'/><path d='M896.7,641.5 L895.5,633 Q894,632 892,632.2 L844,640.1' stroke='#d32f2f'/><path d='M899,641.5 L899,626 Q898.5,621.5 896.1,621.1' stroke='#a01818'/></g>
  </svg>
<div class='t' style='left:164.50px;top:64.25px;font-size:11px;line-height:11px;font-weight:700;color:#e2e2e2;transform:scaleX(0.8635)'>STATISTICS</div>
<div class='t' style='left:245.50px;top:64.25px;font-size:11px;line-height:11px;font-weight:400;color:#9a9a9a;transform:scaleX(0.8667)'>XPLORE</div>
<div class='t' style='left:311.50px;top:64.25px;font-size:11px;line-height:11px;font-weight:400;color:#9a9a9a;transform:scaleX(0.8667)'>POST</div>
<div class='t' style='left:364.50px;top:64.25px;font-size:11px;line-height:11px;font-weight:400;color:#9a9a9a;transform:scaleX(0.8846)'>DEVELOP</div>
<div class='t' style='left:1025.00px;top:59.25px;font-size:7px;line-height:7px;font-weight:400;color:#c0d2e6;transform:scaleX(0.8792)'>TRAINING SESSION INACTIVE</div>
<div class='t' style='left:1034.00px;top:66.78px;font-size:10.5px;line-height:10.5px;font-weight:400;color:#ffffff;transform:scaleX(0.8482)'>Start new session</div>
<div class='t' style='left:57.00px;top:119.85px;font-size:9px;line-height:9px;font-weight:400;color:#eeeeee;transform:scaleX(0.8258)'>SPEED</div>
<div class='t' style='left:57.00px;top:134.60px;font-size:10px;line-height:10px;font-weight:400;color:#cfcfcf;transform:scaleX(0.9474)'>1.57 m/s</div>
<div class='t' style='left:207.00px;top:119.85px;font-size:9px;line-height:9px;font-weight:400;color:#eeeeee;transform:scaleX(0.9022)'>DISTANCE</div>
<div class='t' style='left:207.00px;top:134.60px;font-size:10px;line-height:10px;font-weight:400;color:#cfcfcf;transform:scaleX(0.9714)'>9,117 m</div>
<div class='t' style='left:357.30px;top:119.85px;font-size:9px;line-height:9px;font-weight:400;color:#eeeeee;transform:scaleX(0.8913)'>ACCELERATION</div>
<div class='t' style='left:357.30px;top:134.60px;font-size:10px;line-height:10px;font-weight:400;color:#cfcfcf;transform:scaleX(0.9636)'>30</div>
<div class='t' style='left:508.30px;top:119.85px;font-size:9px;line-height:9px;font-weight:400;color:#eeeeee;transform:scaleX(0.8882)'>POWER</div>
<div class='t' style='left:508.30px;top:134.60px;font-size:10px;line-height:10px;font-weight:400;color:#cfcfcf;transform:scaleX(0.9116)'>681.65 W</div>
<div class='t' style='left:658.30px;top:119.85px;font-size:9px;line-height:9px;font-weight:400;color:#eeeeee;transform:scaleX(0.8978)'>ACTIZONE</div>
<div class='t' style='left:809.30px;top:119.85px;font-size:9px;line-height:9px;font-weight:400;color:#eeeeee;transform:scaleX(0.8732)'>HEART RATE</div>
<div class='t' style='left:809.30px;top:134.60px;font-size:10px;line-height:10px;font-weight:400;color:#cfcfcf;transform:scaleX(0.9146)'>147 BPM</div>
<div class='t' style='left:959.30px;top:119.85px;font-size:9px;line-height:9px;font-weight:400;color:#eeeeee;transform:scaleX(0.9137)'>HIGH RESOLUTION</div>
<div class='t' style='left:57.00px;top:173.15px;font-size:9px;line-height:9px;font-weight:400;color:#eeeeee;transform:scaleX(0.8417)'>EVENTS</div>
<div class='t' style='left:57.00px;top:188.00px;font-size:10px;line-height:10px;font-weight:400;color:#cfcfcf;transform:scaleX(0.9235)'>160</div>
<div class='t' style='left:21.40px;top:246.90px;font-size:12px;line-height:12px;font-weight:400;color:#eeeeee;transform:scaleX(0.9324)'>INSTANTANEOUS SPEED OVER TIME</div>
<div class='t' style='left:1061.00px;top:277.60px;font-size:10px;line-height:10px;font-weight:400;color:#333333;transform:scaleX(0.7786)'>VS</div>
<div class='t' style='left:1088.00px;top:277.60px;font-size:10px;line-height:10px;font-weight:400;color:#ffffff;transform:scaleX(0.9625)'>Acceleration Load</div>
<div class='t' style='left:301.50px;top:301.50px;font-size:10px;line-height:10px;font-weight:400;color:#dddddd;transform:scaleX(1.0000)'>Match - 1st half</div>
<div class='t' style='left:594.00px;top:301.50px;font-size:10px;line-height:10px;font-weight:400;color:#dddddd;transform:scaleX(1.0000)'>Halftime</div>
<div class='t' style='left:862.70px;top:301.50px;font-size:10px;line-height:10px;font-weight:400;color:#dddddd;transform:scaleX(1.0167)'>2nd half</div>
<div class='t' style='left:56.20px;top:307.30px;font-size:10px;line-height:10px;font-weight:400;color:#cccccc;transform:scaleX(1.0000)'>7.5</div>
<div class='t' style='left:64.20px;top:348.40px;font-size:10px;line-height:10px;font-weight:400;color:#cccccc;transform:scaleX(1.0000)'>5</div>
<div class='t' style='left:56.20px;top:389.00px;font-size:10px;line-height:10px;font-weight:400;color:#cccccc;transform:scaleX(1.0000)'>2.5</div>
<div class='t' style='left:1130.50px;top:302.20px;font-size:10px;line-height:10px;font-weight:400;color:#cccccc;transform:scaleX(1.0000)'>10</div>
<div class='t' style='left:1130.50px;top:334.50px;font-size:10px;line-height:10px;font-weight:400;color:#cccccc;transform:scaleX(1.0000)'>7.5</div>
<div class='t' style='left:1130.50px;top:367.20px;font-size:10px;line-height:10px;font-weight:400;color:#cccccc;transform:scaleX(1.0000)'>5</div>
<div class='t' style='left:1130.50px;top:398.60px;font-size:10px;line-height:10px;font-weight:400;color:#cccccc;transform:scaleX(1.0000)'>2.5</div>
<div class='t' style='left:70.20px;top:442.93px;font-size:7.5px;line-height:7.5px;font-weight:400;color:#cccccc;transform:scaleX(0.9789)'>00:00</div>
<div class='t' style='left:141.20px;top:442.93px;font-size:7.5px;line-height:7.5px;font-weight:400;color:#cccccc;transform:scaleX(0.9789)'>06:58</div>
<div class='t' style='left:212.20px;top:442.93px;font-size:7.5px;line-height:7.5px;font-weight:400;color:#cccccc;transform:scaleX(0.9789)'>13:48</div>
<div class='t' style='left:283.20px;top:442.93px;font-size:7.5px;line-height:7.5px;font-weight:400;color:#cccccc;transform:scaleX(0.9789)'>20:38</div>
<div class='t' style='left:354.20px;top:442.93px;font-size:7.5px;line-height:7.5px;font-weight:400;color:#cccccc;transform:scaleX(0.9789)'>27:28</div>
<div class='t' style='left:425.20px;top:442.93px;font-size:7.5px;line-height:7.5px;font-weight:400;color:#cccccc;transform:scaleX(0.9789)'>34:17</div>
<div class='t' style='left:496.20px;top:442.93px;font-size:7.5px;line-height:7.5px;font-weight:400;color:#cccccc;transform:scaleX(0.9789)'>41:07</div>
<div class='t' style='left:567.20px;top:442.93px;font-size:7.5px;line-height:7.5px;font-weight:400;color:#cccccc;transform:scaleX(0.9789)'>47:57</div>
<div class='t' style='left:633.25px;top:442.93px;font-size:7.5px;line-height:7.5px;font-weight:400;color:#cccccc;transform:scaleX(0.9828)'>01:03:13</div>
<div class='t' style='left:704.25px;top:442.93px;font-size:7.5px;line-height:7.5px;font-weight:400;color:#cccccc;transform:scaleX(0.9828)'>01:10:05</div>
<div class='t' style='left:775.25px;top:442.93px;font-size:7.5px;line-height:7.5px;font-weight:400;color:#cccccc;transform:scaleX(0.9828)'>01:16:55</div>
<div class='t' style='left:846.25px;top:442.93px;font-size:7.5px;line-height:7.5px;font-weight:400;color:#cccccc;transform:scaleX(0.9828)'>01:23:45</div>
<div class='t' style='left:917.25px;top:442.93px;font-size:7.5px;line-height:7.5px;font-weight:400;color:#cccccc;transform:scaleX(0.9828)'>01:30:37</div>
<div class='t' style='left:988.25px;top:442.93px;font-size:7.5px;line-height:7.5px;font-weight:400;color:#cccccc;transform:scaleX(0.9828)'>01:37:27</div>
<div class='t' style='left:1059.25px;top:442.93px;font-size:7.5px;line-height:7.5px;font-weight:400;color:#cccccc;transform:scaleX(0.9828)'>01:44:16</div>
<div class='t' style='left:546.70px;top:469.67px;font-size:8.5px;line-height:8.5px;font-weight:400;color:#dddddd;transform:scaleX(0.9480)'>Speed</div>
<div class='t' style='left:598.00px;top:469.67px;font-size:8.5px;line-height:8.5px;font-weight:400;color:#dddddd;transform:scaleX(1.0000)'>Acceleration Load</div>
<div class='t' style='left:34.00px;top:494.25px;font-size:7px;line-height:7px;font-weight:400;color:#ffffff;transform:scaleX(1.0000)'>0 s</div>
<div class='t' style='left:1138.30px;top:494.25px;font-size:7px;line-height:7px;font-weight:400;color:#ffffff;transform:scaleX(0.9793)'>1:48:37 h</div>
<div class='t' style='left:27.30px;top:586.85px;font-size:11px;line-height:11px;font-weight:400;color:#eeeeee;transform:scaleX(0.9283)'>SPEED MAIN METRICS</div>
<div class='t' style='left:627.20px;top:587.15px;font-size:11px;line-height:11px;font-weight:400;color:#eeeeee;transform:scaleX(0.9127)'>TIME PER SPEED ZONE</div>
<div class='t' style='left:27.20px;top:620.67px;font-size:8.5px;line-height:8.5px;font-weight:400;color:#dddddd;transform:scaleX(0.8750)'>MAXIMUM SPEED</div>
<div class='t' style='left:335.20px;top:619.40px;font-size:10px;line-height:10px;font-weight:400;color:#dddddd;transform:scaleX(0.9737)'>7.16 m/s</div>
<div class='t' style='left:27.20px;top:644.57px;font-size:8.5px;line-height:8.5px;font-weight:400;color:#dddddd;transform:scaleX(0.8194)'>AVERAGE SPEED</div>
<div class='t' style='left:335.20px;top:643.30px;font-size:10px;line-height:10px;font-weight:400;color:#dddddd;transform:scaleX(0.9737)'>1.57 m/s</div>
<div class='t' style='left:27.20px;top:670.07px;font-size:8.5px;line-height:8.5px;font-weight:400;color:#dddddd;transform:scaleX(0.8333)'>VERY LOW</div>
<div class='t' style='left:335.20px;top:667.60px;font-size:10px;line-height:10px;font-weight:400;color:#dddddd;transform:scaleX(0.9026)'>01:24:41</div>
<div class='t' style='left:378.30px;top:667.60px;font-size:10px;line-height:10px;font-weight:400;color:#dddddd;transform:scaleX(0.9310)'>(87 %)</div>
<div class='t' style='left:27.20px;top:697.07px;font-size:8.5px;line-height:8.5px;font-weight:400;color:#dddddd;transform:scaleX(0.8750)'>LOW</div>
<div class='t' style='left:335.20px;top:694.60px;font-size:10px;line-height:10px;font-weight:400;color:#dddddd;transform:scaleX(0.9026)'>00:08:21</div>
<div class='t' style='left:378.30px;top:694.60px;font-size:10px;line-height:10px;font-weight:400;color:#dddddd;transform:scaleX(0.9042)'>(9 %)</div>
<div class='t' style='left:27.20px;top:724.07px;font-size:8.5px;line-height:8.5px;font-weight:400;color:#dddddd;transform:scaleX(0.9071)'>MEDIUM</div>
<div class='t' style='left:335.20px;top:721.60px;font-size:10px;line-height:10px;font-weight:400;color:#dddddd;transform:scaleX(0.9026)'>00:02:39</div>
<div class='t' style='left:378.30px;top:721.60px;font-size:10px;line-height:10px;font-weight:400;color:#dddddd;transform:scaleX(0.9042)'>(3 %)</div>
<div class='t' style='left:27.20px;top:751.27px;font-size:8.5px;line-height:8.5px;font-weight:400;color:#dddddd;transform:scaleX(0.9167)'>HIGH</div>
<div class='t' style='left:335.20px;top:748.80px;font-size:10px;line-height:10px;font-weight:400;color:#dddddd;transform:scaleX(0.9026)'>00:01:01</div>
<div class='t' style='left:378.30px;top:748.80px;font-size:10px;line-height:10px;font-weight:400;color:#dddddd;transform:scaleX(0.9042)'>(1 %)</div>
<div class='t' style='left:27.20px;top:778.27px;font-size:8.5px;line-height:8.5px;font-weight:400;color:#dddddd;transform:scaleX(0.8351)'>VERY HIGH</div>
<div class='t' style='left:335.20px;top:775.80px;font-size:10px;line-height:10px;font-weight:400;color:#dddddd;transform:scaleX(0.9026)'>00:00:17</div>
<div class='t' style='left:378.30px;top:775.80px;font-size:10px;line-height:10px;font-weight:400;color:#dddddd;transform:scaleX(0.9042)'>(0 %)</div>
<div class='t' style='left:852.30px;top:619.15px;font-size:9px;line-height:9px;font-weight:400;color:#dddddd;transform:scaleX(0.9526)'>Very high</div>
<div class='t' style='left:819.70px;top:637.85px;font-size:9px;line-height:9px;font-weight:400;color:#dddddd;transform:scaleX(0.9526)'>High</div>
<div class='t' style='left:788.75px;top:657.65px;font-size:9px;line-height:9px;font-weight:400;color:#dddddd;transform:scaleX(1.0000)'>Medium</div>
<div class='t' style='left:795.20px;top:676.15px;font-size:9px;line-height:9px;font-weight:400;color:#dddddd;transform:scaleX(0.9471)'>Low</div>
<div class='t' style='left:941.70px;top:777.45px;font-size:9px;line-height:9px;font-weight:400;color:#dddddd;transform:scaleX(0.9706)'>Very low</div>
<div class='t' style='left:888.05px;top:692.80px;font-size:8px;line-height:8px;font-weight:700;color:#dddddd;transform:scaleX(0.9038)'>TOTAL</div>
<div class='t' style='left:881.35px;top:704.80px;font-size:10px;line-height:10px;font-weight:700;color:#e8e8e8;transform:scaleX(0.9075)'>01:37:01</div>
<div class='t' style='left:20.10px;top:362.80px;font-size:10px;line-height:10px;font-weight:400;color:#cccccc;transform-origin:27.50px 5.00px;transform:rotate(-90deg) scaleX(0.9273)'>Speed (m/s)</div>
<div class='t' style='left:1113.20px;top:362.60px;font-size:10px;line-height:10px;font-weight:400;color:#cccccc;transform-origin:40.00px 5.00px;transform:rotate(90deg) scaleX(0.9625)'>Acceleration Load</div>
</div>
<div id="frame"></div>
</body></html>
